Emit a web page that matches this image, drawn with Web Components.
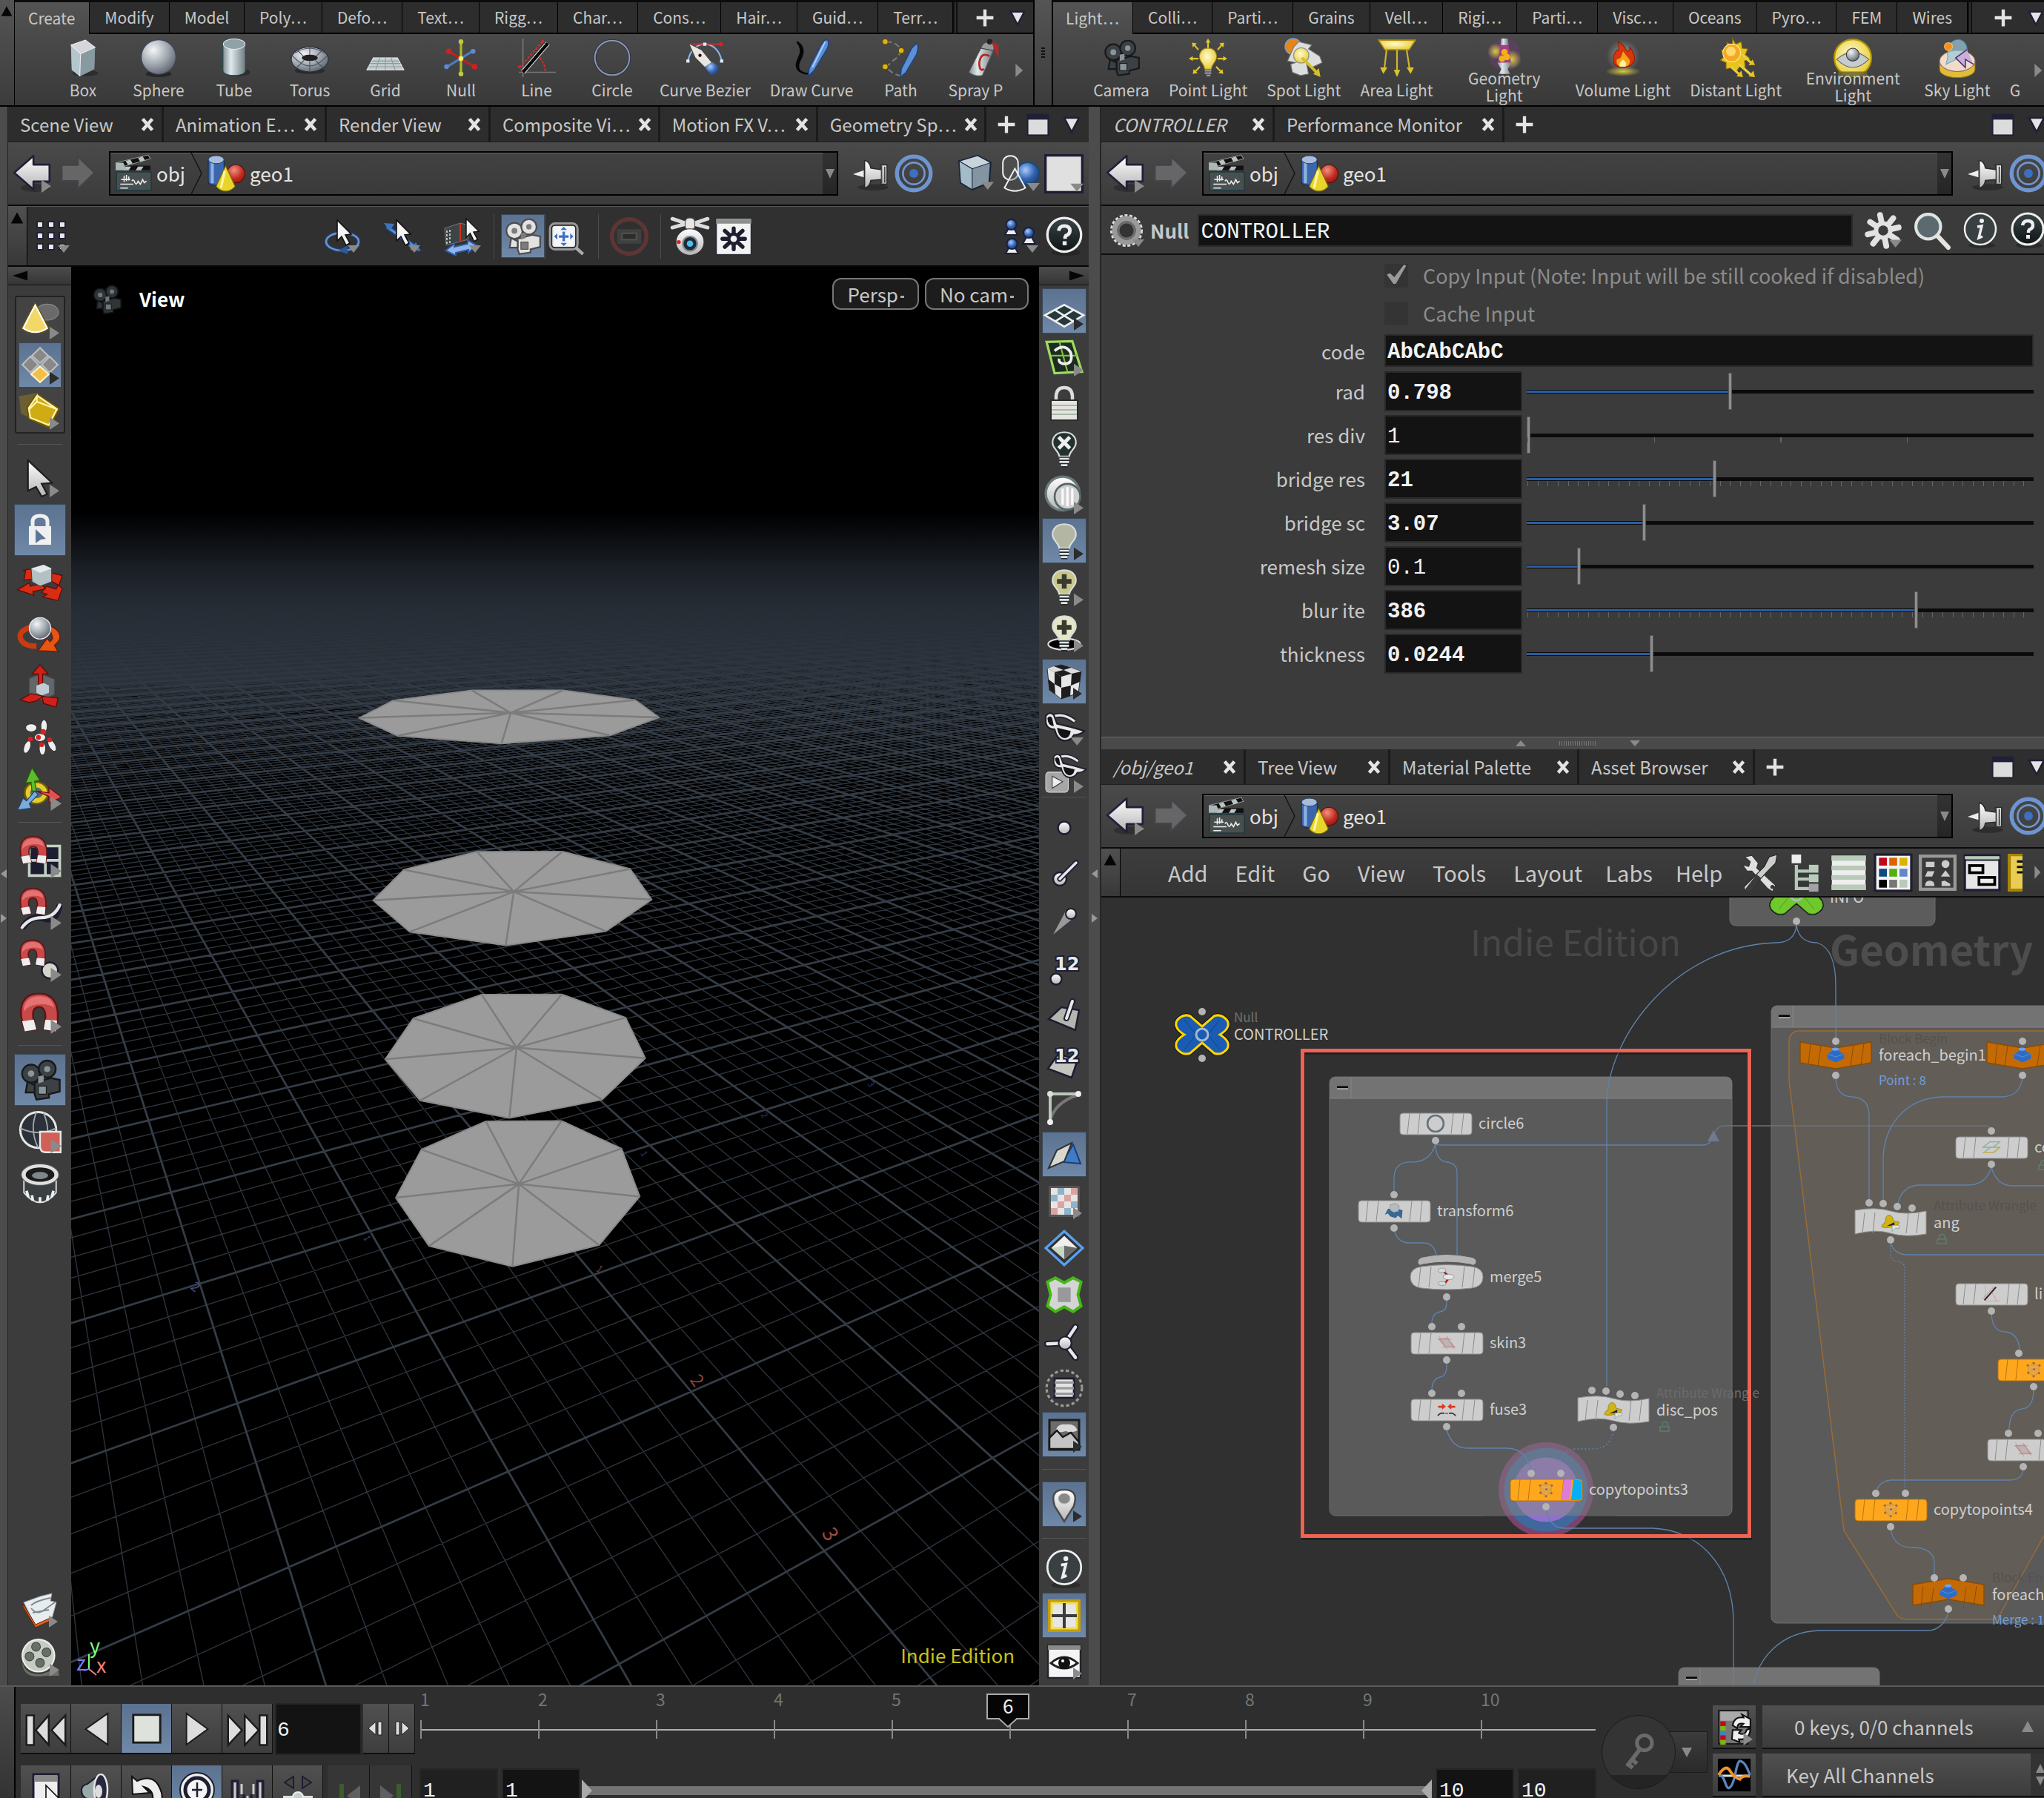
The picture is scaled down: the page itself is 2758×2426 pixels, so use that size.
<!DOCTYPE html>
<html lang="en">
<head>
<meta charset="utf-8">
<title>Geometry editor</title>
<style>
html,body{margin:0;height:100%;background:#2e2e2e;overflow:hidden}
body{font-family:"Noto Sans CJK SC","Noto Sans",sans-serif;color:#c8c8c8}
</style>
</head>
<body>
<hx-app></hx-app>
<script>
/* ---------- icon library: 48 x 48 drawings ---------- */
const DEFS = `<defs>
<linearGradient id="w" x1="0" y1="0" x2="0" y2="1"><stop offset="0" stop-color="#fff"/><stop offset="1" stop-color="#b4b4b4"/></linearGradient>
<linearGradient id="m" x1="0" y1="0" x2="1" y2="0"><stop offset="0" stop-color="#7f8d92"/><stop offset=".35" stop-color="#e0eaec"/><stop offset="1" stop-color="#6f7b80"/></linearGradient>
<radialGradient id="s" cx=".35" cy=".3" r=".8"><stop offset="0" stop-color="#f4f6f8"/><stop offset=".5" stop-color="#a5acb3"/><stop offset="1" stop-color="#565c64"/></radialGradient>
<radialGradient id="b" cx=".4" cy=".35" r=".8"><stop offset="0" stop-color="#a9cbff"/><stop offset=".5" stop-color="#3565b0"/><stop offset="1" stop-color="#16345f"/></radialGradient>
<radialGradient id="r" cx=".4" cy=".3" r=".8"><stop offset="0" stop-color="#f09080"/><stop offset=".6" stop-color="#c02a20"/><stop offset="1" stop-color="#8d1410"/></radialGradient>
<radialGradient id="y" cx=".45" cy=".4" r=".7"><stop offset="0" stop-color="#fffbd0"/><stop offset="1" stop-color="#e4c61e"/></radialGradient>
<radialGradient id="k" cx=".5" cy=".5" r=".5"><stop offset="0" stop-color="#e8d840" stop-opacity=".9"/><stop offset="1" stop-color="#e8d840" stop-opacity="0"/></radialGradient>
<radialGradient id="h" cx=".5" cy=".5" r=".5"><stop offset="0" stop-color="#fff" stop-opacity=".7"/><stop offset="1" stop-color="#aaa" stop-opacity="0"/></radialGradient>
<linearGradient id="d" x1="0" y1="0" x2="0" y2="1"><stop offset="0" stop-color="#3a4446"/><stop offset="1" stop-color="#0e1516"/></linearGradient>
</defs>`;
const magnet = (t) => `<g transform="${t}"><path d="M7 43C-4 12 8 2 23 2C39 2 48 14 42 43L28 42C32 26 30 17 23 17C15 17 14 26 20 42Z" fill="#c94848" stroke="#5a1515" stroke-width="2"/><path d="M6 22C5 10 14 5 23 5C33 5 38 9 40 18C34 12 12 12 6 22Z" fill="#e47272"/><path d="M4 33L17 31 20 42 7 44ZM30 31L43 32 42 44 28 42Z" fill="#eee"/></g>`;
const bulb = (f, x = '') => `<path d="M24 3C12 3 8 12 10 19C12 25 17 27 18 33L30 33C31 27 36 25 38 19C40 12 36 3 24 3Z" fill="${f}" stroke="#d8dcda" stroke-width="2"/><path d="M18 36H30M18 40H30M20 44H28" stroke="#1f2a2c" stroke-width="5"/><path d="M18 36H30M18 40H30M20 44H28" stroke="#e4e4e4" stroke-width="2.400"/>${x}`;
const cursor = (x, y, s = 1) => `<path transform="translate(${x} ${y}) scale(${s})" d="M0 0L0 28 6 22 12 34 17 31 11 20 19 19Z" fill="#f4f4f4" stroke="#111" stroke-width="1.600"/>`;
const movie = (f, l, s) => `<circle cx="14" cy="17" r="10" fill="${f}" stroke="${s}" stroke-width="2"/><circle cx="14" cy="17" r="3.600" fill="${l}"/><circle cx="32" cy="12" r="9.500" fill="${f}" stroke="${s}" stroke-width="2"/><circle cx="32" cy="12" r="3.400" fill="${l}"/><path d="M18 27L36 22 46 24 46 37 34 40 34 44 20 46 18 40Z" fill="${f}" stroke="${s}" stroke-width="2"/><path d="M18 30L10 26 8 38 18 38Z" fill="${f}" stroke="${s}" stroke-width="2"/><rect x="22" y="31" width="9" height="9" fill="${l}" stroke="${s}"/><path d="M22 20L28 19 28 26 22 28Z" fill="${l}"/>`;
const sunglass = `<path d="M7 11Q22 4 37 16" fill="none" stroke="#1d1f2c" stroke-width="6"/><path d="M7 11Q22 4 37 16" fill="none" stroke="#e8e8e8" stroke-width="3"/><path d="M1 9Q6 3 11 8L15 19L32 23L49 28Q44 33 36 33Q33 40 24 40Q15 39 12 26Q3 26 1 18Z" fill="#e8e8e8" stroke="#1d1f2c" stroke-width="2"/><path d="M3 12Q6 8 9 12L11 22Q4 22 3 12ZM15 24L32 28Q31 37 24 37Q17 36 15 24Z" fill="#141414"/>`;
const cubepts = `<path d="M24 8L38 14V32L24 40 10 32V14Z" fill="#dba24d" opacity=".75" stroke="#b07a30"/><path d="M10 14L24 20 38 14M24 20V40" fill="none" stroke="#e9c68c"/><g fill="#8a6a5a"><circle cx="24" cy="7" r="3"/><circle cx="39" cy="13" r="3"/><circle cx="9" cy="13" r="3"/><circle cx="38" cy="33" r="3"/><circle cx="10" cy="32" r="3"/><circle cx="24" cy="41" r="3"/><circle cx="25" cy="23" r="3"/></g>`;
const ICONS = {
box:`<ellipse cx="27" cy="43" rx="16" ry="4" fill="#222" opacity=".6"/><path d="M9 8L27 2 39 11 38 38 20 47 10 39Z" fill="#8b9aa2"/><path d="M9 8L27 2 39 11 21 19Z" fill="#d4d6db"/><path d="M9 8L21 19 20 47 10 39Z" fill="#b4c6cd"/><path d="M21 19L39 11 38 38 20 47Z" fill="#8899a2"/><path d="M9 8L27 2 39 11 21 19ZM21 19L20 47" fill="none" stroke="#eee"/>`,
sphere:`<ellipse cx="24" cy="44" rx="16" ry="4" fill="#1c1c1c" opacity=".7"/><circle cx="24" cy="23" r="21.500" fill="url(#s)" stroke="#3c4468"/>`,
tube:`<ellipse cx="30" cy="42" rx="14" ry="5" fill="#1c1c1c" opacity=".5"/><path d="M10 7V40C10 48 38 48 38 40V7Z" fill="url(#m)" stroke="#1e4a50"/><ellipse cx="24" cy="7" rx="13.500" ry="6.500" fill="#8fa2a8" stroke="#dfe8ea"/>`,
torus:`<ellipse cx="24" cy="40" rx="19" ry="4" fill="#1c1c1c" opacity=".6"/><ellipse cx="24" cy="26" rx="23" ry="15.500" fill="url(#s)" stroke="#2c3040"/><ellipse cx="24" cy="24" rx="10" ry="4" fill="#202022"/><path d="M3 22Q24 46 45 22M6 18Q24 6 42 18M24 11V20M24 28V41M9 15L16 22M39 15L32 22M8 36L17 27M40 36L31 27" fill="none" stroke="#4a5064"/>`,
grid:`<path d="M9 24L39 24 47 39 1 39Z" fill="#c2cdd0" stroke="#eef3f4"/><path d="M7 28H41M5 31H43M3 35H45M17 24L12 39M24 24V39M31 24L36 39" stroke="#8d999d" fill="none"/>`,
nullx:`<g stroke-width="3"><path d="M24 4V44" stroke="#aeb82c"/><path d="M9 16L40 35" stroke="#c02020"/><path d="M38 16L7 35" stroke="#4f7cc0"/></g><g><circle cx="24" cy="4" r="3" fill="#c0ca3a"/><circle cx="24" cy="44" r="3" fill="#c0ca3a"/><circle cx="9" cy="16" r="3.500" fill="#d02020"/><circle cx="41" cy="35" r="3.500" fill="#d02020"/><circle cx="39" cy="16" r="3" fill="#5b8bd4"/><circle cx="6" cy="35" r="3" fill="#5b8bd4"/><circle cx="24" cy="25" r="3" fill="#f4f060"/></g>`,
line:`<path d="M7 0V48M2 42H48" stroke="#777" stroke-width="1.500"/><path d="M7 42L38 6" stroke="#eee" stroke-width="6"/><path d="M7 42L38 6" stroke="#080808" stroke-width="4"/><path d="M3 36L32 3M28 24Q35 32 35 42M31 2L35 6M1 34L6 40" fill="none" stroke="#e02828" stroke-width="2" stroke-dasharray="3 2"/>`,
circle:`<circle cx="24" cy="24" r="21.500" fill="none" stroke="#28304c" stroke-width="3.500"/><circle cx="24" cy="24" r="21.500" fill="none" stroke="#8d97ad" stroke-width="1.800"/>`,
curve:`<path d="M3 28C8 0 40 0 45 28" fill="none" stroke="#82b4f0" stroke-width="2"/><path d="M4 7H44" stroke="#d03030" stroke-width="1.500"/><circle cx="44" cy="7" r="2.500" fill="#e02020"/><path d="M4 6L20 14 33 30 24 36 12 24Z" fill="#e6e6e2" stroke="#444"/><path d="M24 36L33 29 41 34C42 40 38 46 32 46Z" fill="url(#b)"/><circle cx="18" cy="21" r="2" fill="#300"/><path d="M22 5h4v4h-4zM1 26h4v4h-4zM43 26h4v4h-4z" fill="#dfe9ff"/>`,
draw:`<path d="M6 4Q14 14 8 24Q-1 42 20 44Q2 42 10 26Q18 12 6 4Z" fill="#060606" stroke="#060606" stroke-width="2"/><path d="M42 1C46 2 46 6 44 12L27 40 20 47 21 37L36 8Z" fill="#5b8fd6" stroke="#1f447e" stroke-width="1.500"/><path d="M41 4L25 36" stroke="#a9cbf4" stroke-width="2"/>`,
path:`<path d="M6 4Q20 4 24 14Q24 22 14 28L6 36 16 44 26 47" fill="none" stroke="#7a7a7a" stroke-width="2" stroke-dasharray="7 4"/><path d="M44 6C47 8 46 14 44 20L31 42 24 48 25 38L38 12Z" fill="#5b8fd6" stroke="#1f447e" stroke-width="1.500"/><g fill="#dcb414" stroke="#5e4a00"><circle cx="5" cy="4" r="3.500"/><circle cx="25" cy="15" r="3.500"/><circle cx="5" cy="35" r="3.500"/></g>`,
spray:`<path d="M18 12L34 14 20 46Q10 48 3 42Z" fill="url(#m)" stroke="#555"/><path d="M18 12Q20 4 28 4Q36 6 34 15Z" fill="#999" stroke="#444"/><circle cx="29" cy="4" r="3.500" fill="#222"/><path d="M31 4L40 8V26Z" fill="#b02a2a"/><path d="M29 22Q18 16 16 30Q16 42 22 38" fill="none" stroke="#b82424" stroke-width="2.500"/>`,
camera:movie('#3b4144','#8a959a','#17191a'),
cameraw:movie('#e2e2e2','#7c7c7c','#4c4c4c'),
point:`<g stroke="#e2c72a" stroke-width="2"><path d="M24 12V2M12 14L6 7M36 14L42 7M12 25H2M36 25H46M14 35L7 42M34 35L41 42"/></g><g fill="#e2c72a"><path d="M24 0l-3 5h6zM4 5l1 6 5-5zM44 5l-1 6-5-5zM0 25l5-3v6zM48 25l-5-3v6zM5 44l1-6 5 5zM43 44l-1-6-5 5z"/></g><path d="M24 12C15 12 12 20 14 26C16 31 19 32 20 38H28C29 32 32 31 34 26C36 20 33 12 24 12Z" fill="url(#y)" stroke="#a88a10"/><path d="M20 40H28M20 43H28M22 46H27" stroke="#999" stroke-width="2"/>`,
spot:`<circle cx="11" cy="10" r="10" fill="#e88418" stroke="#7aa0c8" stroke-width="1.500"/><path d="M12 10L18 4 34 8 30 13 44 22 47 30 34 36 27 28 30 44 20 46 10 42 8 32 14 30 4 28Z" fill="#dcdede" stroke="#777"/><circle cx="21" cy="21" r="9.500" fill="url(#y)" stroke="#8a8a8a"/><path d="M22 24L42 44" stroke="#d8c020" stroke-width="3.500"/><path d="M45 48l-9-4 7-7z" fill="#d8c020"/>`,
area:`<path d="M1 2H47L39 14H9Z" fill="url(#y)" stroke="#b08a10" stroke-width="1.500"/><g stroke="#d0b62a" stroke-width="2"><path d="M11 14L8 40M24 14V44M36 14L40 40"/></g><g fill="#dcc428"><path d="M7 44l-4-8h9zM24 48l-4-9h8zM41 44l-5-8h9z"/></g>`,
geolight:`<circle cx="24" cy="20" r="20" fill="#7a3c84" opacity=".35"/><circle cx="33" cy="26" r="12" fill="url(#k)"/><circle cx="13" cy="16" r="10" fill="url(#k)"/><path d="M20 0H28L32 30H16Z" fill="#a43c88"/><circle cx="24" cy="17" r="4" fill="#f2b01c"/><circle cx="21" cy="25" r="4" fill="#f2b01c"/><circle cx="27" cy="23" r="4" fill="#f2b01c"/><path d="M20 0H28L29 8H19Z" fill="url(#m)"/><path d="M15 30H33L28 38 31 44H17L20 38Z" fill="url(#m)"/>`,
volume:`<circle cx="24" cy="22" r="21" fill="url(#h)"/><ellipse cx="24" cy="41" rx="22" ry="6" fill="url(#k)"/><path d="M18 4C28 10 26 14 30 16Q34 14 32 10Q40 20 38 28Q34 36 24 36Q12 36 12 26Q12 18 17 14Q20 18 18 4Z" fill="#d8360c" stroke="#8e1c04"/><path d="M24 16Q30 24 32 26Q34 35 24 35Q15 35 16 26Q20 26 22 22Z" fill="#f6a416"/><path d="M24 26Q30 30 27 35H20Q18 31 24 26Z" fill="#fff0a0"/>`,
distant:`<path d="M20 0l4 7 7-3 1 8 7 1-3 7 6 5-7 3 1 8-7-1-4 6-5-5-8 2 0-8-7-3 5-5-4-7 7-2 0-8 7 3z" fill="#e8c41c" stroke="#8c6a08"/><circle cx="19" cy="18" r="11" fill="#f6a820" stroke="#fff0a0"/><circle cx="18" cy="16" r="6" fill="#ffd970"/><g stroke="#e8d040" stroke-width="3"><path d="M32 20L44 31M28 32L44 46M18 35L30 46"/></g><path d="M48 33l-8 0 5-7zM48 48l-8-1 6-7zM33 48l-8-1 6-7z" fill="#e8c41c"/>`,
env:`<circle cx="24" cy="24" r="23" fill="url(#y)" stroke="#b39500" stroke-width="2"/><path d="M4 26Q24 8 44 26Q24 46 4 26Z" fill="#c7ccd1" stroke="#666"/><circle cx="24" cy="20" r="8" fill="url(#s)" stroke="#333"/><path d="M6 41H42V48H6Z" fill="#6e6632" opacity=".85"/>`,
sky:`<path d="M2 28V38C2 52 46 52 46 38V28Z" fill="#e0bc38" stroke="#a07c10"/><ellipse cx="24" cy="28" rx="22" ry="13" fill="#f0dcc8" stroke="#8c7060"/><path d="M12 24Q10 2 26 1Q38 4 36 18L22 26 10 32Z" fill="#9cc8d8" opacity=".7" stroke="#4090b8"/><circle cx="13" cy="10" r="5" fill="#f09018" stroke="#f8c060"/><path d="M36 14L22 24 34 36 34 26 44 32" fill="#c8b0d8" stroke="#50307c" stroke-width="1.500"/>`,
back:`<ellipse cx="28" cy="42" rx="18" ry="5" fill="#2a2a2a" opacity=".7"/><path d="M2 23L26 2V13H46V34H26V44Z" fill="url(#w)" stroke="#20203a" stroke-width="2.500" stroke-linejoin="round"/>`,
fwd:`<path d="M46 23L24 2V13H3V34H24V44Z" fill="#666" stroke="#43434a" stroke-width="2.500" stroke-linejoin="round"/>`,
clap:`<path d="M2 22H47V46H2Z" fill="#48504f" stroke="#1b3a40" stroke-width="1.500"/><path d="M2 14H46V20H2Z" fill="#111"/><path d="M2 10L43 0 46 5 4 17Z" fill="#111" stroke="#999"/><path d="M14 8l6-2 3 5-6 2zM30 4l6-2 3 5-6 2zM14 15h7l-3 5h-7zM30 15h7l-3 5h-7z" fill="#b9c6c2"/><path d="M1 10L11 10 15 20 1 20Z" fill="#aab8b6"/><path d="M8 32H20M12 27V35M15 26V34M18 28V33M22 34Q24 30 26 36Q28 40 30 34L33 38 36 32 38 36 41 34M7 38H24M7 43H17" stroke="#eee" fill="none" stroke-width="1.500"/>`,
geo:`<path d="M1 6V34C1 40 21 40 21 34V6Z" fill="#3c66ac" stroke="#142a52"/><path d="M6 8V36" stroke="#8fb0e0" stroke-width="4"/><ellipse cx="11" cy="6" rx="10" ry="5" fill="#a9bcdc" stroke="#23406e"/><circle cx="36" cy="24" r="11.500" fill="url(#r)" stroke="#5a0c08"/><path d="M23 14L35 40Q30 46 23 46Q16 46 11 40Z" fill="#e8d42c" stroke="#7c6c00"/><path d="M22 20L17 42" stroke="#fff6a0" stroke-width="3"/>`,
pin:`<ellipse cx="26" cy="42" rx="20" ry="4" fill="#262626" opacity=".7"/><path d="M0 25L14 20V29Z" fill="#eee"/><path d="M15 7Q22 9 23 17L36 19V13H44V38H36V32L23 33Q22 41 15 43Z" fill="url(#w)" stroke="#2a2a2a" stroke-width="1.500"/><path d="M41 15V36M37 14V37" stroke="#444" stroke-width="1.800"/>`,
rings:`<circle cx="24" cy="24" r="21" fill="none" stroke="#6f95d0" stroke-width="5"/><circle cx="24" cy="24" r="13.500" fill="none" stroke="#6f95d0" stroke-width="2.500"/><circle cx="24" cy="24" r="5.500" fill="#3f6fc0"/>`,
cube:`<path d="M3 9L27 2 44 11 42 37 20 46 5 37Z" fill="#8395a0" stroke="#16203c" stroke-width="2"/><path d="M3 9L27 2 44 11 20 19Z" fill="#c9d4da" stroke="#16203c"/><path d="M3 9L20 19V46L5 37Z" fill="#a3bcc8" stroke="#16203c"/>`,
shapes:`<circle cx="33" cy="24" r="14" fill="url(#b)" stroke="#174a7c" stroke-width="2"/><rect x="2" y="2" width="19" height="30" rx="9" fill="#555" fill-opacity=".5" stroke="#eee" stroke-width="1.800"/><path d="M17 18L30 42Q17 50 4 42Z" fill="#555" fill-opacity=".35" stroke="#eee" stroke-width="1.800"/>`,
white:`<rect x="1.500" y="1.500" width="45" height="45" fill="#e0e0e0" stroke="#1d1d33" stroke-width="3"/>`,
dots:`<g fill="#e8e8e8" stroke="#20203a" stroke-width="2">${[4,19,34].map(y=>[4,19,34].map(x=>`<rect x="${x}" y="${y}" width="8" height="8"/>`).join('')).join('')}</g>`,
orbit:`<ellipse cx="25" cy="31" rx="22" ry="12" fill="none" stroke="#23406e" stroke-width="5"/><ellipse cx="25" cy="31" rx="22" ry="12" fill="none" stroke="#6f95d0" stroke-width="2.500"/><path d="M20 43l12-7v12z" fill="#2c5aa0"/>${cursor(18,2)}`,
pan:`<path d="M3 11L44 40" stroke="#1f4a88" stroke-width="6"/><path d="M3 11L44 40" stroke="#5b8fd6" stroke-width="3"/><path d="M-1 6l14 1-6 10zM49 44l-15-2 8-10z" fill="#3f74bc"/>${cursor(16,2)}`,
dolly:`<path d="M-1 13L20 6 31 9V28L1 36Z" fill="#3d4446" stroke="#777"/><path d="M2 16V34M6 15V33" stroke="#bbb" stroke-width="2" stroke-dasharray="3 2"/><path d="M20 7V30" stroke="#d03018" stroke-width="2"/><path d="M0 43L12 34V38L30 34V29L42 36 31 46V42L14 46V50Z" fill="#8fb4ec" stroke="#2c5aa0" stroke-width="2"/>${cursor(28,0,.9)}`,
zoomf:`<rect x="3" y="8" width="34" height="32" rx="6" fill="#e6e8ea" stroke="#999" stroke-width="3"/><rect x="8" y="12" width="24" height="24" fill="#f4f6fb"/><path d="M20 18V30M14 24H26" stroke="#3f6fc0" stroke-width="3"/><path d="M20 12l-4 4h8zM20 36l-4-4h8zM8 24l4-4v8zM32 24l-4-4v8z" fill="#3f6fc0"/><rect x="5" y="10" width="30" height="28" rx="4" fill="none" stroke="#222" stroke-width="1.500"/><path d="M35 38L44 46" stroke="#aaa" stroke-width="4"/>`,
stop0:`<circle cx="24" cy="24" r="21.500" fill="none" stroke="#5e3535" stroke-width="5"/><rect x="9" y="15" width="30" height="18" fill="#404040"/><rect x="15" y="20" width="18" height="8" fill="#2c2c2c" stroke="#4e524a" stroke-width="2"/>`,
robot:`<path d="M2 2L20 8L2 13M46 2L28 8L46 13" fill="none" stroke="#ddd" stroke-width="4.500" stroke-linecap="round"/><rect x="18" y="1" width="12" height="15" rx="5" fill="#e6e6e6" stroke="#555"/><ellipse cx="24" cy="31" rx="17.500" ry="16.500" fill="url(#w)" stroke="#333"/><circle cx="24" cy="33" r="9" fill="#1b2a3a" stroke="#888" stroke-width="2"/><circle cx="24" cy="33" r="4" fill="#4fc0e8"/><circle cx="10" cy="31" r="2.500" fill="#e02020"/>`,
gearwin:`<rect x="2" y="1" width="44" height="46" fill="#f2f2f2" stroke="#2a2d38" stroke-width="2"/><path d="M2 2H46V8H2Z" fill="#8d8f8a"/><g stroke="#1d1f30" stroke-width="5" stroke-linecap="round"><path d="M24 14V40M13 17L35 37M35 17L13 37M10 27H38"/></g><circle cx="24" cy="27" r="8" fill="#1d1f30"/><circle cx="24" cy="27" r="4" fill="#f2f2f2"/>`,
people:`<g stroke="#1a1f44" stroke-width="2"><path d="M3 22L8 13H15L20 22ZM27 34L32 25H39L44 34ZM4 47L9 38H16L21 47Z" fill="#eee"/><circle cx="11.500" cy="8" r="7" fill="url(#b)"/><circle cx="35" cy="19" r="7" fill="url(#b)"/><circle cx="12.500" cy="34" r="7" fill="url(#b)"/></g>`,
help:`<ellipse cx="26" cy="44" rx="18" ry="4" fill="#1c1c1c" opacity=".5"/><circle cx="24" cy="22" r="21" fill="url(#d)" stroke="#eee" stroke-width="3"/><path d="M17 17Q18 11 24 11Q31 11 31 17Q31 21 26 23Q25 24 25 27" fill="none" stroke="#eee" stroke-width="4.500"/><rect x="22" y="30" width="5" height="5" fill="#eee"/>`,
info:`<ellipse cx="26" cy="44" rx="18" ry="4" fill="#1c1c1c" opacity=".5"/><circle cx="24" cy="22" r="21" fill="#394041" stroke="#eee" stroke-width="2.500"/><circle cx="26" cy="11" r="3" fill="#eee"/><path d="M20 19L26 18 22 34 27 32" fill="none" stroke="#eee" stroke-width="3.500"/>`,
nullring:`<circle cx="24" cy="24" r="20" fill="none" stroke="#ddd" stroke-width="4" stroke-dasharray="4 2.500"/><circle cx="24" cy="24" r="16" fill="none" stroke="#999" stroke-width="7"/><circle cx="24" cy="24" r="11" fill="#333" stroke="#6b6b6b" stroke-width="3"/>`,
gear:`<g stroke="#e2e2e2" stroke-width="7.500" stroke-linecap="round"><path d="M20 4L28 44M37 8L11 41M44 20L4 29M42 36L7 13"/></g><circle cx="24" cy="24" r="12" fill="#e2e2e2"/><circle cx="24" cy="24" r="6.500" fill="#3c3c3c"/>`,
search:`<circle cx="19" cy="19" r="16" fill="#5c6a70" stroke="#dde4e2" stroke-width="4"/><path d="M31 31L45 46" stroke="#e4e4e0" stroke-width="6" stroke-linecap="round"/>`,
cone:`<ellipse cx="33" cy="14" rx="14" ry="10" fill="#6a6a6a" stroke="#8a8a8a"/><path d="M18 5L33 34Q18 44 3 34Z" fill="#f2d868" stroke="#fff" stroke-width="2"/><path d="M18 2L36 35Q18 47 0 35Z" fill="none" stroke="#705400"/>`,
grid4:`<path d="M24 2L34 12 24 21 14 12ZM12 13L22 23 12 33 2 23ZM36 13L46 23 36 33 26 23Z" fill="#888" stroke="#bdbdbd" stroke-width="2"/><path d="M24 25L35 35 24 45 13 35Z" fill="#f0c048" stroke="#fff0c8" stroke-width="2"/>`,
slab:`<path d="M-2 6L20 2 12 20 14 34 0 28Z" fill="#a8891c" opacity=".4"/><path d="M20 3L48 22 35 45 10 34 8 20Z" fill="#d0ac14" stroke="#6e5600" stroke-width="2"/><path d="M20 5L45 22 35 42 12 33 10 21 20 6V13L11 22M20 13L44 22" fill="none" stroke="#fff4b0" stroke-width="2"/>`,
arrow:`<path d="M9 2L39 30 26 31 33 44 26 47 19 35 9 40Z" fill="url(#w)" stroke="#1c1c1c" stroke-width="2"/>`,
lock:`<path d="M14 20V13Q14 5 24 5Q34 5 34 13V20" fill="none" stroke="#f0f0f0" stroke-width="5"/><rect x="9" y="19" width="30" height="25" fill="#f0f0f0"/><path d="M18 23L32 36 25 37 18 42Z" fill="#5e7696"/>`,
move:`<path d="M-1 33L12 25 13 29 25 26 30 32 16 35 17 39ZM26 36L31 29 42 32 44 28 49 31 44 45 27 41 32 38ZM28 20L37 18 36 14 49 17 45 28 38 24ZM6 22L8 12 5 11 18 9 18 21Z" fill="#d82c14" stroke="#5c0c04"/><path d="M14 9L28 5 37 9V24L24 29 15 24Z" fill="#b4c0c4" stroke="#3c4448"/><path d="M14 9L28 5 37 9 24 14Z" fill="#e4eaec"/>`,
rotate:`<path d="M13 17Q-2 22 3 31Q7 38 20 38" fill="none" stroke="#c83c10" stroke-width="6"/><path d="M34 15Q48 20 46 30Q44 34 40 37L44 44 22 43 32 29 35 33Q40 30 37 25Z" fill="#e85414" stroke="#6a1804"/><circle cx="24" cy="18" r="12" fill="url(#s)" stroke="#eef"/>`,
scale:`<path d="M12 16L25 11 40 17V34L26 40 12 34Z" fill="#7c8488" opacity=".6" stroke="#556"/><path d="M24 1L33 11H27V24H22V11H15ZM2 40L14 33 28 36 20 41 12 43ZM26 36L44 38 42 48 28 44Z" fill="#d02018" stroke="#5c0804"/><path d="M20 24L28 21 34 24V32L26 35 20 32Z" fill="#c0ccd4"/>`,
pose:`<g fill="#eee" stroke="#333"><ellipse cx="13" cy="12" rx="7" ry="5"/><ellipse cx="29" cy="10" rx="4" ry="8"/><ellipse cx="24" cy="24" rx="7" ry="5"/><ellipse cx="8" cy="36" rx="4" ry="8" transform="rotate(20 8 36)"/><ellipse cx="27" cy="38" rx="4" ry="8"/><ellipse cx="39" cy="34" rx="4" ry="8" transform="rotate(-30 39 34)"/></g><g fill="#d82020"><circle cx="28" cy="17" r="3.500"/><circle cx="22" cy="24" r="3"/><circle cx="12" cy="26" r="3"/><circle cx="26" cy="33" r="3"/><circle cx="36" cy="27" r="3"/></g>`,
handle:`<ellipse cx="20" cy="28" rx="13" ry="12" fill="#e4cc30" stroke="#6e6200" stroke-width="2"/><ellipse cx="20" cy="28" rx="7" ry="6" fill="#666"/><path d="M15 0L24 14 18 15 20 26H15L14 16 8 17Z" fill="#5cbc2c" stroke="#245c0c"/><path d="M20 26L34 28V22L48 33 34 39V32Z" fill="#e05050" stroke="#6c1010"/><path d="M22 30L12 40 14 45-1 47 5 34 9 37 18 26Z" fill="#7cacdc" stroke="#204878"/>`,
maggrid:`<path d="M12 12H46V45H12Z" fill="#1c1d30" stroke="#c2d2c4" stroke-width="3"/><path d="M30 12V45M12 28H46" stroke="#c2d2c4" stroke-width="3"/>${magnet('translate(0 0) scale(.72)')}`,
magcurve:`<path d="M4 46Q14 30 28 35T46 20" fill="none" stroke="#1c1d30" stroke-width="7"/>${magnet('translate(0 0) scale(.7)')}<path d="M4 45Q12 34 26 34T46 20" fill="none" stroke="#e8e8e8" stroke-width="3.500" stroke-linecap="round"/>`,
magpt:`<circle cx="35" cy="35" r="9" fill="#d4d4cc" stroke="#1c1d30" stroke-width="2"/>${magnet('scale(.68)')}`,
mag:magnet('translate(0 1)'),
globe:`<circle cx="22" cy="22" r="20" fill="#2c3038" stroke="#e6e6e6" stroke-width="2.500"/><path d="M2 20Q22 30 42 20M20 2Q12 22 22 42M28 3Q36 22 30 40" fill="none" stroke="#9aa" stroke-width="1.500"/><path d="M24 24H47V47H30Q24 47 24 40Z" fill="#d06058" stroke="#e8e8e8" stroke-width="2"/>`,
lens:`<path d="M6 14V34Q24 56 42 34V14Z" fill="#3a4042" stroke="#e4e4e4" stroke-width="1.500"/><path d="M9 32L11 39M15 37L16 43M24 39V45M33 37L32 43M39 32L37 39" stroke="#eee" stroke-width="3"/><ellipse cx="24" cy="14" rx="21" ry="12" fill="#e0e0e0" stroke="#555"/><ellipse cx="24" cy="14" rx="16" ry="8" fill="#1c1c1c"/><ellipse cx="24" cy="15" rx="9" ry="4" fill="#7e888c"/>`,
notebook:`<path d="M2 14L24 6 40 2 38 12 46 14 40 36 18 46Z" fill="#e8ecee" stroke="#99a"/><path d="M1 16L18 44 40 34V38L18 48 1 20Z" fill="#e06424" stroke="#602000"/><path d="M12 18Q18 12 38 8M12 22Q20 32 30 24L44 14M14 28L36 24" fill="none" stroke="#7c8c94" stroke-width="2"/>`,
reel:`<path d="M2 28Q4 47 26 45L46 38 48 47H30Q2 52 2 30Z" fill="#6c7068"/><circle cx="22" cy="22" r="20" fill="#c4cec0" stroke="#eee" stroke-width="2"/><g fill="#6a6e68" stroke="#444"><circle cx="19" cy="11" r="5.500"/><circle cx="32" cy="18" r="5.500"/><circle cx="11" cy="23" r="5.500"/><circle cx="24" cy="31" r="5.500"/></g>`,
gridp:`<path d="M24 16L48 29 24 43 0 29Z" fill="#26383a" stroke="#eee" stroke-width="2.500"/><path d="M12 22L36 37M36 22L12 37" stroke="#eee" stroke-width="2.500"/>`,
greeng:`<path d="M2 5L34 4 46 42 12 44Z" fill="#1d2c20" stroke="#a0dc60" stroke-width="3"/><path d="M18 5L28 42M7 22L40 22" stroke="#7cc040" stroke-width="2"/><path d="M12 16Q24 6 32 18Q36 34 22 32Q16 30 18 26" fill="none" stroke="#eee" stroke-width="3.500"/>`,
padlock:`<path d="M13 21V14Q14 3 24 3Q34 3 35 14V21" fill="none" stroke="#ddd" stroke-width="4.500"/><rect x="6" y="20" width="36" height="27" fill="#e4e4e0" stroke="#2b2b2b" stroke-width="2"/><path d="M7 27H41M7 33H41M7 39H41" stroke="#a9b8a8" stroke-width="2"/>`,
bulbx:bulb('#22302f','<path d="M17 9L31 23M31 9L17 23" stroke="#eee" stroke-width="4.500"/>'),
ball:`<circle cx="22" cy="22" r="21" fill="url(#w)" stroke="#6b7a7c" stroke-width="3"/><circle cx="28" cy="26" r="16" fill="#d0d0d0" stroke="#566" stroke-width="2.500"/><path d="M22 16V36M28 14V38M34 16V36" stroke="#fafafa" stroke-width="3"/>`,
bulb:bulb('#b4b6a4'),
bulbp:bulb('#c9c78c','<path d="M24 8V26M15 17H33" stroke="#3a3a30" stroke-width="6"/>'),
bulbr:`<ellipse cx="24" cy="38" rx="20" ry="7" fill="#000" stroke="#ddd" stroke-width="2"/>${bulb('#e6e6c8','<path d="M24 8V26M15 17H33" stroke="#3a3a30" stroke-width="6"/>')}`,
checker:`<path d="M1 6L20 1 47 10 43 39 20 47 4 35Z" fill="#e6e6e6" stroke="#333"/><path d="M10 3L20 1 33 5 23 8ZM23 8L33 5 47 10 34 13ZM1 6L10 3 23 8 11 11ZM2 20L11 27 12 41 4 35ZM11 11L20 17V32L11 27ZM34 13L47 10 45 24 33 29ZM20 32L33 29 32 43 20 47Z" fill="#1d1d1d"/><path d="M1 6L10 3 23 8 11 11ZM23 8L33 5 47 10 34 13Z" fill="#ddd"/><path d="M23 8L34 13 20 17 11 11Z" fill="#1d1d1d"/>`,
glasses:sunglass,
glassplay:`<rect x="1" y="22" width="28" height="25" rx="4" fill="#a6a6a6" stroke="#ddd"/><path d="M9 27L22 34 9 42Z" fill="#eee" stroke="#333"/><g transform="translate(10 -5) scale(.84)">${sunglass}</g>`,
dot:`<circle cx="24" cy="24" r="8.500" fill="url(#w)" stroke="#1d1d33" stroke-width="2.500"/>`,
dotline:`<circle cx="18" cy="30" r="9" fill="url(#w)" stroke="#1d1d33" stroke-width="2.500"/><path d="M18 30L40 8" stroke="#1d1d33" stroke-width="7" stroke-linecap="round"/><path d="M18 30L40 8" stroke="#e6e6e6" stroke-width="3.500" stroke-linecap="round"/>`,
comet:`<path d="M9 42L26 10 36 20Z" fill="#999"/><circle cx="33" cy="14" r="7" fill="url(#w)" stroke="#1d1d33" stroke-width="2"/>`,
plane:`<path d="M3 30L20 14 44 18 39 45Z" fill="#b4b6ae" stroke="#1d1d33" stroke-width="2.500"/><path d="M27 29L35 6" stroke="#1d1d33" stroke-width="8" stroke-linecap="round"/><path d="M27 29L35 6" stroke="#e8e8e8" stroke-width="4" stroke-linecap="round"/>`,
curve2:`<path d="M4 44Q10 16 44 6" fill="none" stroke="#777" stroke-width="4"/><path d="M5 42V5H42" fill="none" stroke="#b9c8ba" stroke-width="4"/><circle cx="5" cy="5" r="4" fill="#d6e2d6"/><circle cx="43" cy="5" r="4" fill="#eee"/><circle cx="5" cy="43" r="4" fill="#eee"/>`,
flip:`<path d="M22 34L36 10 46 36Z" fill="#3f7cc8" stroke="#1c3c74" stroke-width="2"/><path d="M3 42L14 18 34 8 24 33Z" fill="#d8d8d0" stroke="#333" stroke-width="2"/>`,
check2:`<rect x="3" y="3" width="42" height="42" rx="2" fill="#555"/>${[0,1,2,3].map(r=>[0,1,2,3].map(c=>`<rect x="${6+c*9}" y="${6+r*9}" width="9" height="9" fill="${(r+c)%2?((r+c)%4===1?'#8fb4c8':'#d9a4a4'):'#e8e4e4'}"/>`).join('')).join('')}`,
diamond:`<path d="M24 3L47 24 24 45 1 24Z" fill="#333" stroke="#5aa0f0" stroke-width="3"/><path d="M24 9L40 24 24 38 8 24Z" fill="#c8d4c4"/><path d="M24 9L40 24 24 21 8 24Z" fill="#eee"/><path d="M24 21L40 24 24 38Z" fill="#6a6a6a"/>`,
greenq:`<path d="M3 8L13 3 24 9 35 3 45 8 41 24 45 38 35 45 24 39 13 45 3 38 7 24Z" fill="#d4d4d4" stroke="#44b814" stroke-width="3.500"/><path d="M16 15H32V33H16Z" fill="#999"/>`,
spokes:`<path d="M24 26L3 27M26 24L38 6M26 28L38 44" stroke="#1d1d33" stroke-width="8" stroke-linecap="round"/><path d="M24 26L3 27M26 24L38 6M26 28L38 44" stroke="#e8e8e8" stroke-width="4" stroke-linecap="round"/><circle cx="25" cy="26" r="8" fill="url(#w)" stroke="#1d1d33" stroke-width="2"/>`,
film:`<circle cx="24" cy="24" r="22" fill="none" stroke="#999" stroke-width="3" stroke-dasharray="4 3"/><rect x="12" y="12" width="24" height="24" fill="#e4e4e4" stroke="#1d1d33" stroke-width="2.500"/><path d="M12 17H36M12 24H36M12 31H36" stroke="#999" stroke-width="3"/>`,
image:`<rect x="4" y="4" width="40" height="40" fill="#6c6c6c" stroke="#1d1d1d" stroke-width="3"/><path d="M12 18Q16 8 26 10Q38 8 42 18Q34 22 26 19Q16 22 12 18Z" fill="#d8d8d8"/><path d="M4 28L14 18 22 27 33 21 44 34V43H4Z" fill="#c4c4c4" stroke="#1a1a1a" stroke-width="2.500"/>`,
marker:`<path d="M24 47L11 26Q4 4 24 4Q44 4 37 26Z" fill="url(#w)" stroke="#4a4a4a" stroke-width="2.500"/><ellipse cx="24" cy="16" rx="8" ry="7" fill="#888" stroke="#bbb"/>`,
panes:`<rect x="4" y="4" width="40" height="40" fill="#f2ecb4" stroke="#c49c10" stroke-width="4"/><rect x="7" y="7" width="34" height="34" fill="#e6e6e6" stroke="#f0e040" stroke-width="3"/><path d="M24 7V41M7 24H41" stroke="#3c3c3c" stroke-width="4"/>`,
eye:`<rect x="2" y="2" width="44" height="44" fill="#f4f4f4" stroke="#24262e" stroke-width="2.500"/><path d="M2 2H46V8H2Z" fill="#888b86"/><path d="M6 26Q24 10 42 26Q24 40 6 26Z" fill="#fff" stroke="#222" stroke-width="3"/><circle cx="24" cy="26" r="8" fill="#111"/><circle cx="22" cy="23" r="2" fill="#fff"/>`,
num12:`<circle cx="13" cy="39" r="7.500" fill="url(#w)" stroke="#1d1d33" stroke-width="2.500"/>`,
pl12:`<path d="M2 34L16 14 42 22 34 46Z" fill="#c4c6be" stroke="#1d1d33" stroke-width="2.500"/>`,
tools:`<path d="M5 4L14 2 22 12 20 18 44 40 40 48 34 44 14 22 8 22 2 14 10 16 12 10Z" fill="#dfe0de" stroke="#333"/><path d="M46 1L44 12 34 22 12 46 5 47 4 42 30 16 36 4Z" fill="#cacfca" stroke="#222"/><path d="M20 26L26 31 12 47 4 47Z" fill="#3a3a3a"/><circle cx="40" cy="42" r="2.500" fill="#333"/>`,
tree:`<path d="M14 14V44H30M14 22H30M14 32H30" stroke="#b4c8b8" stroke-width="4" fill="none"/><rect x="8" y="1" width="12" height="11" fill="#eee"/><rect x="30" y="14" width="12" height="10" fill="#b9ccbc"/><rect x="30" y="26" width="12" height="10" fill="#b9ccbc"/><rect x="30" y="38" width="12" height="10" fill="#a4a0a8"/>`,
list:`<path d="M2 2H46V46H2Z" fill="#eee" stroke="#2b2b2b"/><path d="M2 2H46V9H2ZM2 15H46V21H2ZM2 27H46V33H2ZM2 39H46V46H2Z" fill="#b9c9ba"/>`,
palette:`<rect x="1" y="1" width="46" height="46" fill="#f4f4f4" stroke="#1d1d33" stroke-width="3"/>${['#c00818','#dc6400','#dcb400','#104884','#54b010','#6088c8','#000','#777','#b9c9ba'].map((c,i)=>`<rect x="${6+(i%3)*13}" y="${5+(i/3|0)*14}" width="10" height="10" fill="${c}"/>`).join('')}`,
shapes9:`<rect x="2" y="3" width="44" height="42" fill="#3a3a3a" stroke="#999" stroke-width="4"/><path d="M9 10H20V17H9ZM11 22H20L17 29H8ZM28 29L34 21 40 29ZM29 35L33 34 40 38V41H29ZM8 41Q8 34 14 34Q20 34 20 41Z" fill="#ccc"/><circle cx="34" cy="13" r="5" fill="#ccc"/>`,
netwin:`<rect x="2" y="2" width="44" height="44" fill="#e6e6e6" stroke="#1d1d33" stroke-width="3"/><path d="M2 3H46V7H2Z" fill="#b9c9ba"/><path d="M2 8H46" stroke="#1d1d33" stroke-width="2"/><rect x="8" y="15" width="17" height="9" fill="#eee" stroke="#000" stroke-width="3.500"/><rect x="20" y="30" width="20" height="9" fill="#eee" stroke="#000" stroke-width="3.500"/>`,
note:`<path d="M2 1H48V47H2Z" fill="#e8cc54" stroke="#a88400" stroke-width="4"/><path d="M12 10H48M12 17H48M12 24H48" stroke="#111" stroke-width="3"/>`,
first:`<g fill="#ddd" stroke="#1b1b1b" stroke-width="2"><rect x="3" y="10" width="8" height="32"/><path d="M27 10L13 26 27 42ZM45 10L30 26 45 42Z"/></g>`,
last:`<g fill="#ddd" stroke="#1b1b1b" stroke-width="2"><rect x="37" y="10" width="8" height="32"/><path d="M3 10L18 26 3 42ZM21 10L36 26 21 42Z"/></g>`,
revp:`<path d="M40 3L9 25 40 47Z" fill="#ddd" stroke="#1b1b1b" stroke-width="2"/>`,
stop:`<rect x="5" y="5" width="38" height="39" fill="#dde2dd" stroke="#1b1b1b" stroke-width="3"/>`,
play:`<path d="M9 3L39 25 9 47Z" fill="#ddd" stroke="#1b1b1b" stroke-width="2"/>`,
stepb:`<path d="M24 6V42L4 24ZM30 6H40V42H30Z" fill="#ddd" stroke="#1b1b1b" stroke-width="2"/>`,
stepf:`<path d="M24 6V42L44 24ZM8 6H18V42H8Z" fill="#ddd" stroke="#1b1b1b" stroke-width="2"/>`,
winarrow:`<path d="M7 3H41V48H7Z" fill="#eee" stroke="#1d1d33" stroke-width="3"/><path d="M9 4H39V13H9Z" fill="#888"/>${cursor(24,18)}`,
speaker:`<path d="M4 24Q4 18 12 16L30 2Q40 14 36 46L12 36Q4 34 4 24Z" fill="#9aa" stroke="#1d1d33" stroke-width="2"/><ellipse cx="30" cy="24" rx="9" ry="21" fill="#26283e" stroke="#e6e6e6" stroke-width="2.500"/><ellipse cx="27" cy="26" rx="5" ry="9" fill="#ddd"/>`,
loop:`<path d="M5 30L4 6 11 12Q36 0 44 28Q46 38 42 46H8V38H32Q34 24 20 20L28 28Z" fill="#eee" stroke="#111" stroke-width="2"/>`,
clock:`<circle cx="24" cy="24" r="23" fill="#eee" stroke="#1d1d33" stroke-width="2"/><circle cx="24" cy="24" r="16" fill="#f4f4f4" stroke="#1d1d33" stroke-width="5"/><path d="M24 14V34M17 24H31" stroke="#1d1d33" stroke-width="2.500"/>`,
ticks:`<path d="M3 48V12H11V48M37 48V12H45V48M19 48V30M29 48V30" fill="none" stroke="#1d1d33" stroke-width="3"/><path d="M7 14V48M16 16V30M24 32V48M32 16V30M41 14V48" stroke="#ccc" stroke-width="3"/>`,
keys:`<path d="M18 6L6 14 18 22ZM30 6L42 14 30 22Z" fill="#444" stroke="#1d1d33" stroke-width="2"/><path d="M4 34H44" stroke="#ddd" stroke-width="4"/><circle cx="24" cy="34" r="7" fill="#c4d0c8" stroke="#eee" stroke-width="2"/>`,
kprev:`<path d="M12 16H18V48H12Z" fill="#3c5c2c"/><path d="M40 18L22 32 40 46Z" fill="#606060"/>`,
knext:`<path d="M32 16H38V48H32Z" fill="#3c5c2c"/><path d="M10 18L28 32 10 46Z" fill="#606060"/>`,
key:`<circle cx="31" cy="13" r="9" fill="none" stroke="#6a6a6a" stroke-width="4.500"/><path d="M26 20L10 41M16 33L22 38M11 38L17 43" stroke="#6a6a6a" stroke-width="5"/>`,
refresh:`<rect x="4" y="3" width="38" height="43" fill="#777" stroke="#1b1b1b" stroke-width="2"/><path d="M6 4H40V16H6Z" fill="#aaa"/>${['#c00818','#7cb80c','#3c84cc','#c00818','#7cb80c'].map((c,i)=>`<rect x="6" y="${17+i*6}" width="7" height="6" fill="${c}"/>`).join('')}<path d="M22 22Q24 10 36 12L34 8 45 14V24H32L36 20Q28 18 28 26ZM22 28H33L30 32Q38 36 40 28L45 26Q44 42 30 40L31 44 21 40Z" fill="#eee" stroke="#111" stroke-width="2"/>`,
wave:`<rect x="1" y="1" width="46" height="46" fill="#000"/><path d="M2 25H46" stroke="#ddd" stroke-width="3"/><path d="M2 24Q8 24 11 34T17 42Q22 40 26 20T34 5Q40 6 46 24" fill="none" stroke="#5c84c0" stroke-width="3.500"/><path d="M2 24Q12 8 18 18T32 30Q36 24 46 26" fill="none" stroke="#f09428" stroke-width="4"/>`,
x:`<path d="M11 9L37 39M37 9L11 39" stroke="#e4e4e4" stroke-width="9"/>`,
plus:`<path d="M24 3V45M3 24H45" stroke="#e4e4e4" stroke-width="8"/>`,
win:`<path d="M1 1H47V47H1Z" fill="#1f1f38"/><path d="M4 13H44V44H4Z" fill="#dcdcdc"/>`,
down:`<path d="M4 6H44L24 44Z" fill="#e4e4e4" stroke="#1f1f38" stroke-width="5"/>`,
ups:`<path d="M24 4L46 44H2Z" fill="#050505"/>`,
lefts:`<path d="M2 24L46 10V38Z" fill="#050505"/>`,
rights:`<path d="M46 24L2 10V38Z" fill="#050505"/>`,
n_transform:`<path d="M0 34L8 18 18 18 20 26 34 26 34 18 46 22 44 44 34 36 28 42 14 38 8 30Z" fill="#386894"/><path d="M14 8L28 4 37 10V22L24 28 14 22Z" fill="#b4bcc0" stroke="#678"/>`,
n_merge:`<path d="M14 8L32 24 20 40" stroke="#b02020" stroke-width="5" fill="none"/><ellipse cx="12" cy="7" rx="10" ry="6" fill="#d4dcdc" stroke="#667"/><ellipse cx="29" cy="24" rx="14" ry="7" fill="#e4e8e8" stroke="#667"/><ellipse cx="12" cy="41" rx="10" ry="5" fill="#d4dcd4" stroke="#667"/>`,
n_skin:`<path d="M4 14L26 12 44 34 20 34Z" fill="#bdb4b4" stroke="#c08080" stroke-width="2"/><path d="M0 14H36M12 35H48M4 6L26 42M24 6L44 40" stroke="#c48c8c" stroke-width="1.500"/>`,
n_fuse:`<path d="M2 14H12V8L22 16 12 24V19H2ZM46 14H36V8L26 16 36 24V19H46Z" fill="#d83a20"/><path d="M0 40Q10 30 18 34M48 40Q38 30 30 34" fill="none" stroke="#333" stroke-width="3"/><path d="M20 34H28" stroke="#c44" stroke-width="3"/>`,
n_hat:`<path d="M0 34Q6 22 10 24Q10 2 22 4Q32 8 30 18L46 22Q46 30 34 32Q12 40 0 34Z" fill="#d0b414" stroke="#6e5e00"/><path d="M14 32L34 22V30Z" fill="#222"/><path d="M28 30H46V38H36L28 46V38Z" fill="#dde4d8" stroke="#678"/>`,
n_brick:`<path d="M2 20L14 14V6L32 6V14L46 20V32L24 42 2 32Z" fill="#2c6cc8"/><ellipse cx="23" cy="8" rx="9" ry="4" fill="#6ca0ec"/><path d="M2 20L24 28 46 20" fill="none" stroke="#7cb0f4"/>`,
n_color:`<path d="M2 24L20 10H46L28 24ZM4 38L22 24H46L30 38Z" fill="none" stroke="#8cae9c" stroke-width="2.500"/><path d="M4 38H28L46 24" fill="none" stroke="#c8b048" stroke-width="2.500"/>`,
n_line:`<path d="M8 2V42H46" fill="none" stroke="#a99"/><path d="M6 40L36 6" stroke="#322" stroke-width="4"/><path d="M2 36L32 3M26 22Q34 30 36 42" stroke="#c88" stroke-width="2" fill="none" stroke-dasharray="3 2"/>`,
n_cube:cubepts,
n_circle:`<circle cx="24" cy="24" r="21" fill="none" stroke="#64737a" stroke-width="5"/>`
};
const TRI = {
 down:`<path d="M32 36H48L40 46Z" fill="#8a8a8a"/>`,
 right:`<path d="M36 32L48 40 36 48Z" fill="#8a8a8a"/>`,
 dark:`<path d="M36 32L48 40 36 48Z" fill="#2c2c2c"/>`
};
class HxIcon extends HTMLElement{
 connectedCallback(){
  const s=this.getAttribute('size')||52,n=this.getAttribute('name'),t=this.getAttribute('tri');
  const num=(n==='num12'||n==='pl12')?`<text x="11" y="${n==='num12'?27:25}" font-family="DejaVu Sans" font-weight="700" font-size="24" fill="#e8e8e8" stroke="#1d1d33" stroke-width="4" paint-order="stroke">12</text>`:'';
  this.attachShadow({mode:'open'}).innerHTML=`<style>:host{display:block;flex:none;width:${s}px;height:${s}px}svg{display:block;overflow:visible}</style><svg width="${s}" height="${s}" viewBox="0 0 48 48">${DEFS}${ICONS[n]||''}${num}${t?TRI[t]:''}</svg>`;
 }
}
customElements.define('hx-icon',HxIcon);
const ic=(n,s=52,t='')=>`<hx-icon name="${n}" size="${s}"${t?` tri="${t}"`:''}></hx-icon>`;
const RESET=`*{box-sizing:border-box}button,input,select{font:inherit;color:inherit;border:0;margin:0;padding:0;background:none;border-radius:0}button{display:flex;align-items:center;justify-content:center;flex:none}`;

/* ---------- shelf: tab strip above a row of tools ---------- */
class HxShelf extends HTMLElement{
 connectedCallback(){
  const d=SHELVES[this.getAttribute('set')];
  this.attachShadow({mode:'open'}).innerHTML=`<style>${RESET}
  :host{display:flex;box-sizing:border-box;min-width:0;height:144px;border-bottom:2px solid #000;background:#2e2e2e;font-size:21px}
  .grip{width:20px;flex:none;border-right:1px solid #000;background:linear-gradient(#555,#3c3c3c);padding:7px 1px}
  .body{flex:1;min-width:0;display:flex;flex-direction:column;overflow:hidden}
  .tabs{height:46px;flex:none;display:flex;border-top:3px solid #0c0c0c;line-height:43px}
  .tabs button{padding:0 20px;border-right:1px solid #000;border-bottom:2px solid #000;height:43px;background:#2d2d2d}
  .tabs button[aria-selected=true]{background:linear-gradient(#545454,#4a4a4a);border-bottom:0;padding:0 19px 0 18px}
  .rest{flex:1;display:flex;align-items:center;justify-content:flex-end;gap:20px;padding-right:10px;border-bottom:2px solid #000;border-left:6px double #111}
  .bleed .rest{padding-right:0}.bleed .tabs button[aria-selected=true]{padding:0 18px 0 17px}
  .tools{flex:1;min-width:0;display:flex;padding-left:41px;background:linear-gradient(#4a4a4a,#393939);position:relative}
  .tool{flex:none;min-width:102px;padding:6px 13px 0;display:flex;flex-direction:column;align-items:center;justify-content:flex-start;line-height:24px}
  .tool span{margin-top:5px;white-space:pre;text-align:center}
  .tool.two{width:166px;line-height:23px}.tool.two span{margin-top:-10px;position:relative}
  .tool.cut{padding-right:0;align-items:flex-start;min-width:0}
  .tool.cut hx-icon{margin-left:25px}
  .more{position:absolute;right:12px;top:40px;width:18px;height:18px;background:#8a8a8a;clip-path:polygon(35% 0,90% 50%,35% 100%)}
  .bleed .more{right:1px}
  </style>${d.grip?`<div class="grip">${ic('ups',16)}</div>`:''}
  <div class="body ${d.grip?'':'bleed'}"><div class="tabs" role="tablist">${d.tabs.map((t,i)=>`<button role="tab" aria-selected="${!i}">${t}</button>`).join('')}<div class="rest">${ic('plus',26)}${ic('down',22)}</div></div>
  <div class="tools">${d.tools.map(([l,n,c])=>`<button class="tool ${c||''}">${n?ic(n,52):'<hx-icon size="52"></hx-icon>'}<span>${l}</span></button>`).join('')}<i class="more"></i></div></div>`;
 }
}
const SHELVES={
 create:{grip:true,tabs:['Create','Modify','Model','Poly…','Defo…','Text…','Rigg…','Char…','Cons…','Hair…','Guid…','Terr…'],
  tools:[['Box','box'],['Sphere','sphere'],['Tube','tube'],['Torus','torus'],['Grid','grid'],['Null','nullx'],['Line','line'],['Circle','circle'],['Curve Bezier','curve'],['Draw Curve','draw'],['Path','path'],['Spray P','spray','cut']]},
 light:{tabs:['Light…','Colli…','Parti…','Grains','Vell…','Rigi…','Parti…','Visc…','Oceans','Pyro…','FEM','Wires'],
  tools:[['Camera','camera'],['Point Light','point'],['Spot Light','spot'],['Area Light','area'],['Geometry\nLight','geolight','two'],['Volume Light','volume'],['Distant Light','distant'],['Environment\nLight','env','two'],['Sky Light','sky'],['G','','cut']]}
};
customElements.define('hx-shelf',HxShelf);

/* ---------- pane tabs ---------- */
class HxTabs extends HTMLElement{
 connectedCallback(){
  const tabs=JSON.parse(this.getAttribute('tabs'));
  this.attachShadow({mode:'open'}).innerHTML=`<style>${RESET}
  :host{display:flex;height:48px;flex:none;background:#2e2e2e;font-size:24px;line-height:46px;overflow:hidden}
  .t{display:flex;align-items:center;justify-content:space-between;gap:7px;padding:0 7px 0 16px;border-right:3px solid #1b1b1b;background:#2d2d2d;border-bottom:1px solid #1f1f1f}
  .t:first-child{background:#494949;border:0;padding-right:8px}
  .it{font-style:italic}
  .sp{flex:1}.add{margin:0 14px}.end{display:flex;align-items:center;gap:18px;padding-right:11px}
  :host([bleed]) .end{padding-right:0;margin-right:-2px}
  </style>${tabs.map(([n,w,it])=>`<div class="t" style="min-width:${w}px"><button class="${it?'it':''}">${n}</button><button>${ic('x',24)}</button></div>`).join('')}<button class="add">${ic('plus',26)}</button><span class="sp"></span><div class="end">${ic('win',31)}${ic('down',24)}</div>`;
 }
}
customElements.define('hx-tabs',HxTabs);

/* ---------- path bar ---------- */
class HxPath extends HTMLElement{
 connectedCallback(){
  this.attachShadow({mode:'open'}).innerHTML=`<style>${RESET}
  :host{display:flex;align-items:center;height:86px;flex:none;background:linear-gradient(#4a4a4a,#3b3b3b);border-bottom:2px solid #0b0b0b;font-size:26px;line-height:54px;color:#e4e4e4;padding:0 7px 0 6px;overflow:hidden}
  .nav{display:flex;gap:11px;width:130px;flex:none}
  .bar{flex:1;min-width:0;height:60px;border:2px solid #000;background:linear-gradient(#424242,#3a3a3a);box-shadow:inset 0 1px #666;display:flex;align-items:center}
  .seg{gap:6px;padding-left:6px}.seg+svg+.seg{padding:0}
  .chev{width:18px;height:56px;margin:0 6px;flex:none}
  .dd{width:19px;height:56px;margin-left:auto;background:linear-gradient(#333,#252525)}
  .dd::after{content:"";border:6px solid transparent;border-top:13px solid #8a8a8a;border-bottom:0}
  .tools{display:flex;gap:6px;padding-left:20px;flex:none}
  :host([bleed]){padding-right:0}:host([bleed]) .tools{margin-right:-5px}
  </style><div class="nav"><button>${ic('back',52,'right')}</button><button>${ic('fwd',50)}</button></div>
  <div class="bar"><button class="seg">${ic('clap',50)}obj</button><svg class="chev" viewBox="0 0 18 56"><path d="M2 0L16 28 2 56" fill="none" stroke="#151515" stroke-width="1.500"/></svg><button class="seg">${ic('geo',51)}geo1</button><button class="dd"></button></div>
  <div class="tools"><button>${ic('pin',50)}</button><button>${ic('rings',52)}</button><slot></slot></div>`;
 }
}
customElements.define('hx-path',HxPath);

/* ---------- 3D viewport ---------- */
class HxViewport extends HTMLElement{
 connectedCallback(){
  const K=1.759,H=395,W0=.001944,AX=-.0002285,AZ=-.000124,N0=W0*398;
  const pt=(X,Z,k=0)=>{const w=W0+AX*X+AZ*Z;const n=N0+AX*-32*X+AZ*2072*Z+k*426,y=1+H*w+k*2529,q=w+k;return [n/q*K,y/q*K]};
  const f=p=>p[0].toFixed(1)+' '+p[1].toFixed(1);
  const far=1/68,near=1/920;let minor='',major='';
  const add=(a,b,i)=>{if((a[0]<90&&b[0]<90)||(a[0]>1410&&b[0]>1410))return;const s='M'+f(a)+'L'+f(b);if(i%5)minor+=s;else major+=s};
  for(let i=-900;i<=60;i++){const X=i/5;const z=w=>(w-W0-AX*X)/AZ;add(pt(X,z(far)),pt(X,z(near)),i)}
  for(let i=-1400;i<=700;i++){const Z=i/5;const x=w=>(w-W0-AZ*Z)/AX;add(pt(x(far),Z),pt(x(near),Z),i)}
  let discs='';
  for(const k of [0,-.000118,-.0002365,-.0003547]){
   const c=pt(0,0,k),v=[];for(let j=0;j<9;j++){const a=(28+j*40)*Math.PI/180,p=pt(.79*Math.cos(a),.79*Math.sin(a),k);v.push([p[0],c[1]+(p[1]-c[1])*1.04-2])}
   c[1]-=2;
   discs+=`<path d="M${v.map(f).join('L')}Z" fill="#9b9b9b" stroke="#8c8c8c" stroke-width="2"/><path d="${v.map(p=>'M'+f(c)+'L'+f(p)).join('')}" stroke="#7c7c7c" stroke-width="2.500" fill="none"/>`;
  }
  const lab=(x,y,t,c,r,s)=>`<text x="${x}" y="${y}" fill="${c}" font-size="${s}" transform="rotate(${r} ${x} ${y})">${t}</text>`;
  this.attachShadow({mode:'open'}).innerHTML=`<style>${RESET}
  :host{display:block;position:relative;background:#000;overflow:hidden;min-width:0}
  svg.s{position:absolute;inset:0;width:100%;height:100%;display:block}
  .hd{position:relative;display:flex;align-items:flex-start;gap:8px;padding:15px 14px 0 27px}
  .hd hx-icon{margin-top:8px;opacity:.8}
  b{color:#fff;font-size:26px;line-height:55px;margin:0 auto 0 15px}
  .pill{height:43px;padding:0 18px;border:2px solid #777;border-radius:12px;background:#1c1c1c;color:#c8c8c8;font-size:26px;line-height:38px}
  .pill::after{content:"";width:5px;height:3px;background:#aaa;margin:8px 0 0 3px}
  .ed{position:absolute;right:33px;bottom:21px;font-size:26px;line-height:40px;color:#c8c21a}
  </style><svg class="s" viewBox="96 360 1306 1914" preserveAspectRatio="xMidYMin slice">
  <defs><linearGradient id="fog" x1="0" y1="690" x2="0" y2="960" gradientUnits="userSpaceOnUse"><stop offset="0" stop-color="#000"/><stop offset=".1" stop-color="#080a0d"/><stop offset=".28" stop-color="#1a1e25"/><stop offset=".45" stop-color="#252b33"/><stop offset=".55" stop-color="#252b33" stop-opacity=".8"/><stop offset="1" stop-color="#252b33" stop-opacity="0"/></linearGradient></defs>
  <path d="${minor}" stroke="#2d343d" stroke-width="1.400" fill="none"/><path d="${major}" stroke="#343c46" stroke-width="2.800" fill="none"/>
  <rect x="96" y="360" width="1306" height="600" fill="url(#fog)"/>
  ${lab(803,1714,'1','#6a3634',35,14)}${lab(930,1862,'2','#8a4440',55,24)}${lab(1108,2068,'3','#9a4a44',60,28)}${lab(490,1670,'1','#3c4878',60,12)}${lab(256,1738,'2','#44508a',40,18)}${lab(864,1556,'1','#2c3660',60,12)}${lab(1026,1504,'2','#2c3660',60,12)}${lab(1170,1462,'3','#2c3660',60,12)}
  ${discs}
  <path d="M120 2252V2232" stroke="#7dfa7d" stroke-width="2"/><path d="M120 2252L113 2254" stroke="#7d7dfa" stroke-width="2"/><path d="M120 2252L130 2260" stroke="#fa7d7d" stroke-width="2"/>
  <text x="121" y="2231" fill="#7dfa7d" font-size="27">y</text><text x="103" y="2254" fill="#7d7dfa" font-size="27">z</text><text x="130" y="2257" fill="#fa7d7d" font-size="27">x</text>
  </svg><div class="hd">${ic('camera',42)}<b>View</b><button class="pill">Persp</button><button class="pill">No cam</button></div><div class="ed">Indie Edition</div>`;
 }
}
customElements.define('hx-viewport',HxViewport);

/* ---------- scene pane ---------- */
const B=(n,c='',t='')=>`<button class="${c}">${ic(n,c.includes('lg')?58:c.includes('big')?52:48,t)}</button>`;
class HxScene extends HTMLElement{
 connectedCallback(){
  this.attachShadow({mode:'open'}).innerHTML=`<style>${RESET}
  :host{display:flex;flex-direction:column;min-width:0;min-height:0;background:#3c3c3c}
  .view{width:20px;flex:none}
  .wide{margin-right:4px}
  .tb{display:flex;height:82px;flex:none;background:#303030;border-bottom:2px solid #060606;align-items:center;border-top:1px solid #555}
  .g{width:26px;align-self:stretch;border-right:1px solid #000;background:linear-gradient(#505050,#383838);padding:6px 3px;flex:none}
  .tb .in{flex:1;display:flex;align-items:center;padding:0 4px 0 3px}
  .tb button{width:59px;height:59px}.tb .s{width:1px;height:60px;background:#4c4c4c;margin:0 12px}
  .tb .v{width:82px}.tb .v+.s{margin-left:0;margin-right:9px}.tb .on+.s{margin:0}.tb .stop+.s{margin-right:10px}
  .sp1{flex:317}.sp2{flex:323}
  .on{background:linear-gradient(#5b7290,#7089a8);box-shadow:inset 0 0 0 1px #3a4858}
  .mid{flex:1;min-height:0;display:grid;grid-template-columns:85px minmax(0,1fr) 67px}
  .lt,.rt{display:flex;flex-direction:column;align-items:center;background:#3c3c3c;min-height:0;overflow:hidden}
  .cap{align-self:stretch;height:25px;flex:none;background:linear-gradient(#4c4c4c,#353535);border-bottom:1px solid #111;padding:1px 5px}
  .lt>button{width:70px;height:70px}.lt hr,.rt hr{width:60px;height:1px;border:0;background:#555;flex:none}
  .grp{margin:14px 0;width:68px;height:186px;flex:none;border:2px solid #222;border-radius:3px;display:flex;flex-direction:column;align-items:center;background:#434343}
  .grp button{width:58px;height:61px}
  .lt hr{margin:9px 0 11px}.lt .grp+hr{margin:0 0 10px}.lt .x{flex:1}.lt .x~button{height:64px}.lt{padding-bottom:6px}
  .rt>button{width:60px;height:61px;margin-bottom:1px}.rt>.cap+button{margin-top:4px}.rt>.gap{margin-top:4px}
  .rt hr{margin:0 0 10px}.rt>.k{margin-bottom:2px}.rt .k+hr{margin:14px 0 16px}.rt .pin+hr{margin:14px 0 10px}
  .rt .cap{display:flex;justify-content:flex-end}
  </style>
  <hx-tabs tabs='[["Scene View",210],["Animation E…",220],["Render View",221],["Composite Vi…",227],["Motion FX V…",213],["Geometry Sp…",227]]'></hx-tabs>
  <hx-path><span class="view"></span><span class="wide">${ic('cube',50,'down')}</span>${ic('shapes',52,'down')}${ic('white',53,'down')}</hx-path>
  <div class="tb"><div class="g">${ic('ups',18)}</div><div class="in">${B('dots','','down')}<span class="sp1"></span>${B('orbit','v','down')}${B('pan','v','down')}${B('dolly','v','down')}<i class="s"></i>${B('cameraw','on big')}<i class="s"></i>${B('zoomf','big')}<i class="s"></i>${B('stop0','big stop')}<i class="s"></i>${B('robot','big')}${B('gearwin','big')}<span class="sp2"></span>${B('people','','down')}${B('help','big')}</div></div>
  <div class="mid"><div class="lt"><div class="cap">${ic('lefts',22)}</div><div class="grp">${B('cone','big','right')}${B('grid4','on big','dark')}${B('slab','big','right')}</div><hr>${B('arrow','big','right')}${B('lock','on')}${B('move','lg')}${B('rotate','lg')}${B('scale','lg')}${B('pose','big')}${B('handle','lg','right')}<hr>${B('maggrid','lg','right')}${B('magcurve','lg','right')}${B('magpt','lg','right')}${B('mag','lg','right')}<hr>${B('camera','on lg')}${B('globe','lg','right')}${B('lens','lg')}<span class="x"></span>${B('notebook','','right')}${B('reel','big','right')}</div>
  <hx-viewport></hx-viewport>
  <div class="rt"><div class="cap">${ic('rights',22)}</div>
  ${B('gridp','on big','dark')}${B('greeng','big','right')}${B('padlock')}${B('bulbx','big')}${B('ball','big','right')}${B('bulb','on big','dark')}${B('bulbp','big','right')}${B('bulbr','big','right')}${B('checker','on gap','dark')}${B('glasses','big','down')}${B('glassplay','big','right')}<hr>
  ${['dot','dotline','comet','num12','plane','pl12','curve2'].map(n=>B(n,'k')).join('')}${B('flip','on k')}${B('check2','k','right')}${['diamond','greenq','spokes','film'].map(n=>B(n,'k big')).join('')}${B('image','on k','dark')}<hr>${B('marker','on pin','dark')}<hr>${B('info','k big')}${B('panes','on')}${B('eye','','right')}</div></div>`;
 }
}
customElements.define('hx-scene',HxScene);

/* ---------- parameter pane ---------- */
const MONO='"Liberation Mono",monospace';
class HxParams extends HTMLElement{
 connectedCallback(){
  const P=[['rad','0.798',40,1],['res div','1',0,0,4],['bridge res','21',37,1,50],['bridge sc','3.07',23,1],['remesh size','0.1',10,0],['blur ite','386',77,1,50],['thickness','0.0244',24.5,1]];
  this.attachShadow({mode:'open'}).innerHTML=`<style>${RESET}
  :host{display:flex;flex-direction:column;flex:none;background:#3b3b3b;font-size:26px;overflow:hidden}
  .hd{height:66px;flex:none;display:flex;align-items:center;border-bottom:2px solid #0d0d0d;padding:1px 0 0 10px;gap:8px}
  .hd b{font-size:26px;line-height:60px;margin-right:4px}
  .hd input{flex:1;min-width:0;height:44px}
  .hd .t{display:flex;gap:16px;width:250px;flex:none;padding-left:8px;align-items:center}
  input[type=text]{background:#131313;border:2px solid #2a2a2a;color:#f2f2f2;font-family:${MONO};font-size:29px;padding:5px 2px 0}
  .rows{padding:2px 14px 0 0}
  .r{display:grid;grid-template-columns:356px 212px minmax(0,1fr);align-items:center;height:59px}
  .r>label:first-child{text-align:right}
  .n>input[type=text]{height:54px;width:186px;justify-self:end}
  .c{height:51px;grid-template-columns:356px minmax(0,1fr);column-gap:26px;color:#8b8b8b}.c label{display:flex;align-items:center;gap:20px;font-size:27px}
  .code{height:50px;grid-template-columns:356px minmax(0,1fr);column-gap:26px}.code input{height:44px;width:100%}
  .bd{font-weight:700}
  input[type=checkbox]{appearance:none;width:32px;height:32px;background:#343434}
  input[type=checkbox]:checked::after{content:"";display:block;width:32px;height:30px;background:#9a9a9a;clip-path:polygon(10% 50%,24% 44%,42% 62%,82% 6%,92% 10%,48% 92%,38% 92%)}
  .sl{position:relative;display:flex;padding-left:6px}
  input[type=range]{appearance:none;width:100%;height:50px;background:linear-gradient(90deg,#2a5da6 var(--v),transparent var(--v)) 0 24px/100% 3px no-repeat,linear-gradient(#0b0b0b,#0b0b0b) 0 23px/100% 5px no-repeat}
  input[type=range]::-webkit-slider-thumb{appearance:none;width:5px;height:50px;background:#8e8e8e;border:1px solid #555}
  .tk::after{content:"";position:absolute;left:7px;right:0;top:28px;height:7px;background:repeating-linear-gradient(90deg,#666 0 1px,transparent 1px calc(100%/var(--n)));pointer-events:none}
  </style><div class="hd">${ic('nullring',48,'down')}<b>Null</b><input type="text" value="CONTROLLER" aria-label="CONTROLLER"><div class="t">${ic('gear',50,'down')}${ic('search',50)}${ic('info',48)}${ic('help',48)}</div></div>
  <div class="rows"><div class="r c"><span></span><label><input type="checkbox" checked disabled>Copy Input (Note: Input will be still cooked if disabled)</label></div>
  <div class="r c"><span></span><label><input type="checkbox" disabled>Cache Input</label></div>
  <div class="r code"><label for="code">code</label><input id="code" type="text" class="bd" value="AbCAbCAbC"></div>
  ${P.map(([l,v,p,b,n],i)=>`<div class="r n"><label for="p${i}">${l}</label><input id="p${i}" type="text" class="${b?'bd':''}" value="${v}"><div class="sl ${n?'tk':''}" style="--n:${n||1};--v:${p}%"><input type="range" min="0" max="100" step="0.5" value="${p}" aria-label="${l}"></div></div>`).join('')}</div>`;
 }
}
customElements.define('hx-params',HxParams);

/* ---------- node network ---------- */
class HxNetwork extends HTMLElement{
 connectedCallback(){
  const dot=(x,y)=>`<circle cx="${x}" cy="${y}" r="5" fill="#b4b4b4"/>`;
  const mini=(n,x,y,s=25)=>`<svg x="${x-s/2}" y="${y-s/2}" width="${s}" height="${s}" viewBox="0 0 48 48">${ICONS[n]}</svg>`;
  const T=(x,y,t,c='#cfcfcf',s=20,e='')=>`<text x="${x}" y="${y+s*.36}" font-size="${s}" fill="${c}" ${e}>${t}</text>`;
  const bars=(x,y,c)=>`<path d="M${x-35} ${y-14}L${x-38} ${y+14}M${x-21} ${y-14}L${x-24} ${y+14}M${x+24} ${y-14}L${x+21} ${y+14}M${x+38} ${y-14}L${x+35} ${y+14}" stroke="${c}" fill="none"/>`;
  const node=(x,y,i,ins,label,col='#cdcdcd',st='#8c8c8c')=>`<rect x="${x-48}" y="${y-14}" width="97" height="29" rx="4" fill="${col}" stroke="${st}"/>${bars(x,y,st)}${mini(i,x,y)}${ins.map(d=>dot(x+d,y-22)).join('')}${dot(x,y+23)}${label?T(x+58,y,label):''}`;
  const OR='#ffa71c',OS='#b87410';
  const lockg=(x,y)=>`<path d="M${x-3} ${y-1}V${y-5}Q${x} ${y-8} ${x+4} ${y-5}V${y}" fill="none" stroke="#5c8068" stroke-width="1.500"/><rect x="${x-6}" y="${y}" width="12" height="6" fill="none" stroke="#5c8068" stroke-width="1.500"/>`;
  const wr=(x,y,label,dim)=>`<path d="M${x-48} ${y-17}Q${x-20} ${y-22} ${x} ${y-16}T${x+48} ${y-16}V${y+15}Q${x+20} ${y+20} ${x} ${y+14}T${x-48} ${y+15}Z" fill="#cdcdcd" stroke="#8c8c8c"/>${bars(x,y,'#8c8c8c')}${mini('n_hat',x,y)}${dot(x-29,y-27)}${dot(x-10,y-26)}${dot(x+9,y-22)}${dot(x+29,y-20)}${dot(x,y+23)}${T(x+58,y,label)}${T(x+58,y-23,'Attribute Wrangle',dim,17)}${lockg(x+69,y+22)}`;
  const fe=(x,y,d)=>`<path d="M${x-48} ${y-14}L${x} ${y-14+8*d} ${x+48} ${y-14}V${y+14}L${x} ${y+14+8*d} ${x-48} ${y+14}Z" fill="#c46a04" stroke="#8a4c06" stroke-width="1.500" stroke-linejoin="round"/><path d="M${x-34} ${y-11}L${x-37} ${y+16}M${x-20} ${y-9}L${x-24} ${y+18}M${x+24} ${y-10}L${x+20} ${y+18}M${x+38} ${y-12}L${x+34} ${y+16}" stroke="#8a4c06" fill="none"/>${mini('n_brick',x,y+4*d)}`;
  const W=d=>`<path d="${d}"/>`;
  const box=(x,y,w,h)=>`<rect x="${x}" y="${y}" width="${w}" height="${h}" rx="8" fill="#5a5a5a" stroke="#6e6e6e"/><path d="M${x} ${y+29}V${y+8}Q${x} ${y} ${x+8} ${y}H${x+w-8}Q${x+w} ${y} ${x+w} ${y+8}V${y+29}Z" fill="#737373"/><path d="M${x} ${y+29}H${x+w}M${x+29} ${y}V${y+29}" stroke="#858585"/><path d="M${x+10} ${y+14}H${x+25}" stroke="#000" stroke-width="3"/><path d="M${x+10} ${y+16}H${x+25}" stroke="#eee"/>`;
  const xp=(x,y)=>`M${x} ${y-11}L${x+16} ${y-25}Q${x+26} ${y-29} ${x+34} ${y-19}Q${x+39} ${y-9} ${x+24} ${y}Q${x+39} ${y+9} ${x+34} ${y+19}Q${x+26} ${y+29} ${x+16} ${y+25}L${x} ${y+11} ${x-16} ${y+25}Q${x-26} ${y+29} ${x-34} ${y+19}Q${x-39} ${y+9} ${x-24} ${y}Q${x-39} ${y-9} ${x-34} ${y-19}Q${x-26} ${y-29} ${x-16} ${y-25}Z`;
  const xs=(x,y,f,s,sw)=>`<path d="${xp(x,y)}" fill="${f}" stroke="#111" stroke-width="${sw+2}"/><path d="${xp(x,y)}" fill="${f}" stroke="${s}" stroke-width="${sw}"/><path d="M${x-24} ${y-20}L${x-8} ${y}M${x+24} ${y-20}L${x+8} ${y}M${x-24} ${y+20}L${x-8} ${y}M${x+24} ${y+20}L${x+8} ${y}" stroke="#0004"/><circle cx="${x}" cy="${y}" r="8" fill="${f}" stroke="#a9b9cc" stroke-width="3"/>`;
  this.attachShadow({mode:'open'}).innerHTML=`<style>
  :host{display:block;flex:1;min-height:0;overflow:hidden;background:#303030}
  svg.n{display:block;width:100%;height:100%}
  </style><svg class="n" viewBox="1486 1211 1272 1063" preserveAspectRatio="xMinYMin slice">
  ${T(1984,1273,'Indie Edition','#474747',48)}${T(2469,1283,'Geometry','#4d4d4d',56,'font-weight="700"')}
  <rect x="2334" y="1180" width="277" height="69" rx="8" fill="#5c5c5c" stroke="#6c6c6c"/>
  ${box(1794,1453,543,592)}${box(2390,1357,600,833)}${box(2265,2250,271,80)}
  <path d="M2428 1391H2758V2072L2688 2185H2573Q2566 2185 2560 2180L2488 2065 2414 1458V1407Q2414 1391 2428 1391Z" fill="#625d57"/>
  <path d="M2758 1391H2428Q2414 1391 2414 1407V1458L2488 2065 2560 2180Q2566 2185 2573 2185H2688Q2694 2184 2698 2179L2758 2072" fill="none" stroke="#9a6c34" stroke-width="1.500"/>
  <circle cx="2086" cy="2010" r="64" fill="#78446c"/><circle cx="2086" cy="2010" r="56.500" fill="#41689c"/><circle cx="2086" cy="2010" r="43.500" fill="#9070cc"/>
  <clipPath id="cb"><path d="M2000 1900H2200V2045H2000Z"/></clipPath><g clip-path="url(#cb)"><path d="M2000 1940H2180V2045H2000Z" fill="#5a5a5a"/><circle cx="2086" cy="2010" r="64" fill="#7c6078"/><circle cx="2086" cy="2010" r="56.500" fill="#647690"/><circle cx="2086" cy="2010" r="43.500" fill="#8c7ca8"/></g>
  <g fill="none" stroke="#5f83ad" stroke-width="1.300">
  ${W('M2424 1248Q2422 1272 2396 1272C2260 1276 2168 1400 2168 1490V1870')}
  ${W('M2424 1248Q2427 1272 2452 1272Q2477 1280 2477 1330V1400')}
  ${W('M1937 1543Q1937 1545 1945 1545H2300Q2308 1544 2312 1532')}
  <path d="M2312 1532Q2316 1519 2328 1519H2680Q2686 1520 2687 1526" stroke="#6a7480"/>
  ${W('M1937 1543Q1930 1568 1905 1568Q1881 1567 1881 1590V1608')}
  ${W('M1937 1543Q1937 1567 1953 1568Q1966 1570 1966 1582V1693')}
  ${W('M1881 1660Q1886 1677 1902 1677H1920Q1935 1677 1938 1693')}
  ${W('M1952 1754Q1953 1769 1943 1770Q1932 1772 1932 1786')}
  ${W('M1952 1838Q1953 1857 1943 1858Q1932 1861 1932 1876')}
  ${W('M1952 1929Q1959 1954 1980 1954H2034Q2060 1955 2066 1985')}
  <path d="M2177 1930Q2172 1955 2150 1955H2125Q2108 1957 2106 1974" stroke-dasharray="2 3"/>
  ${W('M2086 2037Q2092 2062 2110 2062H2230C2290 2064 2339 2110 2339 2190V2274')}
  ${W('M2477 1455Q2478 1480 2500 1480Q2522 1482 2522 1505V1620')}
  ${W('M2729 1455Q2725 1480 2700 1480H2620C2570 1482 2541 1520 2541 1565V1620')}
  ${W('M2687 1575Q2680 1599 2655 1599H2590Q2566 1600 2561 1624M2687 1575Q2694 1600 2716 1600H2758')}
  ${W('M2551 1676Q2555 1693 2575 1693H2758')}
  <path d="M2551 1676V1695Q2552 1701 2560 1702Q2570 1703 2570 1712V2012" stroke-dasharray="2 2"/>
  ${W('M2687 1772Q2688 1797 2706 1797Q2724 1799 2725 1822')}
  ${W('M2744 1874Q2744 1900 2728 1901Q2711 1903 2711 1930')}
  ${W('M2730 1983Q2728 1997 2712 1997H2552Q2536 1998 2532 2012')}
  ${W('M2551 2063Q2555 2088 2580 2088Q2610 2088 2610 2110V2126')}
  ${W('M2629 2175Q2622 2200 2600 2200H2455C2400 2202 2372 2240 2366 2274')}
  </g>
  <path d="M2304 1540L2312 1525 2320 1540Z" fill="#6f7b8c"/>
  ${xs(2424,1207,'#70c92c','#4d9c18',1)}${dot(2424,1243)}${T(2469,1211,'INFO')}
  ${xs(1622,1396,'#1a5cb4','#ffd500',3)}${dot(1622,1365)}${dot(1622,1428)}${T(1665,1373,'Null','#707070',17)}${T(1665,1396,'CONTROLLER')}
  ${node(1937,1516,'n_circle',[],'circle6')}${node(1881,1634,'n_transform',[0],'transform6')}
  <path d="M1914 1703Q1914 1698 1920 1697Q1952 1690 1984 1697Q1992 1698 1991 1703Q1990 1708 1984 1705Q1952 1699 1920 1705Q1914 1708 1914 1703Z" fill="#b4b4b4" stroke="#b4b4b4"/>
  <path d="M1903 1723Q1903 1711 1918 1709Q1952 1704 1986 1709Q2001 1711 2001 1723Q2001 1736 1986 1738Q1952 1742 1918 1738Q1903 1736 1903 1723Z" fill="#cdcdcd" stroke="#8c8c8c"/>${bars(1952,1723,'#8c8c8c')}${mini('n_merge',1952,1723)}${dot(1952,1750)}${T(2010,1723,'merge5')}
  ${node(1952,1812,'n_skin',[-20,20],'skin3')}${node(1952,1902,'n_fuse',[-20,20],'fuse3')}${wr(2177,1903,'disc_pos','#6b6b6b')}
  ${node(2086,2010,'n_cube',[-20,20],'copytopoints3',OR,OS)}<path d="M2110 1997H2121L2118 2024H2107Z" fill="#dd7bd8"/><path d="M2123 1997H2130Q2134 1997 2134 2001V2020Q2134 2024 2130 2024H2120Z" fill="#04b0f4"/>
  ${fe(2477,1420,1)}${dot(2477,1405)}${dot(2477,1451)}${T(2535,1402,'Block Begin','#55524f',17)}${T(2535,1424,'foreach_begin1')}${T(2535,1458,'Point : 8','#6f9fdc',17)}
  ${fe(2729,1420,1)}${dot(2729,1405)}${dot(2729,1451)}
  ${node(2687,1548,'n_color',[0],'co')}${lockg(2757,1572)}${wr(2551,1650,'ang','#55524f')}${node(2687,1746,'n_line',[],'li')}
  ${node(2744,1848,'n_cube',[-20],'',OR,OS)}${node(2730,1956,'n_skin',[-20,20],'')}${node(2551,2037,'n_cube',[-20,20],'copytopoints4',OR,OS)}
  ${fe(2629,2152,-1)}${dot(2610,2129)}${dot(2649,2129)}${dot(2629,2171)}${T(2688,2129,'Block En','#55524f',17)}${T(2688,2152,'foreach')}${T(2688,2186,'Merge : 1','#6f9fdc',17)}
  <rect x="1757.500" y="1417.500" width="603" height="655" fill="none" stroke="#111" stroke-opacity=".5" stroke-width="5" transform="translate(1 3)"/><rect x="1757.500" y="1417.500" width="603" height="655" fill="none" stroke="#ee6352" stroke-width="5"/>
  </svg>`;
 }
}
customElements.define('hx-network',HxNetwork);

/* ---------- right column: parameters over network ---------- */
class HxRight extends HTMLElement{
 connectedCallback(){
  this.attachShadow({mode:'open'}).innerHTML=`<style>${RESET}
  :host{display:flex;flex-direction:column;min-width:0;min-height:0;background:#3b3b3b;border-left:1px solid #2a2a2a}
  hx-params{height:716px}
  .split{height:17px;flex:none;background:#4a4a4a;border-top:1px solid #6a6a6a;display:flex;align-items:center;justify-content:center;gap:45px;padding-left:14px}
  .split i{border:7px solid transparent;border-bottom:8px solid #8a8a8a;border-top:0}.split i.d{border-top:8px solid #8a8a8a;border-bottom:0}
  .split u{width:50px;height:6px;background:repeating-linear-gradient(90deg,#777 0 1px,transparent 1px 3px)}
  .menu{height:66px;flex:none;display:flex;align-items:center;background:linear-gradient(#3d3d3d,#353535);border-bottom:2px solid #0b0b0b;font-size:29px;line-height:60px;overflow:hidden}
  .g{width:26px;align-self:stretch;border-right:1px solid #000;background:linear-gradient(#505050,#383838);padding:6px 3px;margin-right:64px;flex:none}
  nav{display:flex;gap:37px;margin-right:25px}nav button:nth-last-child(-n+2){margin-left:-6px}
  .ics{display:flex;gap:9px;flex:none}.cut{width:20px;overflow:hidden;justify-content:flex-start}
  .more{width:10px;height:18px;flex:none;background:#8a8a8a;clip-path:polygon(0 0,80% 50%,0 100%);margin-left:16px}
  </style>
  <hx-tabs bleed tabs='[["CONTROLLER",234,1],["Performance Monitor",310]]'></hx-tabs><hx-path bleed></hx-path><hx-params></hx-params>
  <div class="split"><i></i><u></u><i class="d"></i></div>
  <hx-tabs bleed tabs='[["/obj/geo1",195,1],["Tree View",195],["Material Palette",255],["Asset Browser",237]]'></hx-tabs><hx-path bleed></hx-path>
  <div class="menu"><div class="g">${ic('ups',18)}</div><nav>${['Add','Edit','Go','View','Tools','Layout','Labs','Help'].map(m=>`<button>${m}</button>`).join('')}</nav><div class="ics">${['tools','tree','list','palette','shapes9','netwin'].map(n=>`<button>${ic(n,51)}</button>`).join('')}<button class="cut">${ic('note',50)}</button></div><i class="more"></i></div>
  <hx-network></hx-network>`;
 }
}
customElements.define('hx-right',HxRight);

/* ---------- playbar ---------- */
class HxPlaybar extends HTMLElement{
 connectedCallback(){
  const ticks=[...Array(10)].map((_,i)=>`<path d="M${1+i*159} 45V70" stroke="#8a8a8a" stroke-width="2"/>${i===5?'':`<text x="${i*159}" y="26" font-size="23" fill="#757575">${i+1}</text>`}`).join('');
  this.attachShadow({mode:'open'}).innerHTML=`<style>${RESET}
  :host{display:flex;box-sizing:border-box;height:152px;flex:none;background:#2e2e2e;border-top:2px solid #5a5a5a;overflow:hidden;font-size:26px}
  .g{width:21px;flex:none;background:linear-gradient(#4c4c4c,#333);border-right:2px solid #000}
  .l{flex:1;min-width:0;display:flex;flex-direction:column;padding:0 0 0 7px}
  .row{display:flex;align-items:center;height:68px;flex:none}
  .a{margin-top:23px}.b{margin-top:19px;height:60px}
  button.k{width:68px;height:68px;background:linear-gradient(#505050,#3e3e3e);border-right:1px solid #111;border-bottom:2px solid #111}
  button.k.on{background:linear-gradient(#5b7290,#7089a8)}
  button.h{width:35px}button.d{width:57px;background:#363636}.d.p{margin-left:6px}.d.q{margin-right:10px}
  input[type=text]{background:#131313;border:2px solid #262626;color:#f2f2f2;font-family:${MONO};font-size:28px;padding:2px 1px 0;height:70px}
  .f{width:117px;margin:0 2px 0 3px}.r{width:106px;margin-right:5px}.b input{height:60px;padding:0 3px}.dim{background:#202020!important}.r:last-child{margin:0}
  .time{flex:1;min-width:0;margin-left:7px;height:96px;overflow:visible;display:block;align-self:flex-start;margin-top:-23px}
  .rng{flex:1;height:12px;background:#737373;margin:0 5px 0 0;position:relative}
  .rng::before,.rng::after{content:"";position:absolute;top:-9px;width:14px;height:30px;background:#aaa;left:-3px;clip-path:polygon(0 0,100% 50%,0 100%)}
  .rng::after{left:auto;right:0;clip-path:polygon(100% 0,0 50%,100% 100%)}
  .key{width:157px;flex:none;display:flex;align-items:center;justify-content:flex-start;padding:26px 0 0 7px}
  .key .c{width:100px;height:100px;border-radius:50%;background:linear-gradient(#343434 82%,#242424 82%);border:1px solid #1a1a1a;z-index:1}
  .key .dd{width:56px;height:56px;margin-left:-13px;background:linear-gradient(#3c3c3c,#2a2a2a);border:1px solid #1c1c1c}
  .dd::after{content:"";border:7px solid transparent;border-top:13px solid #8a8a8a;border-bottom:0}
  .e{width:447px;flex:none;display:grid;grid-template-columns:58px 1fr;grid-auto-rows:59px;gap:6px 9px;padding-top:25px}
  .e button,.e .sel{background:linear-gradient(#505050,#3c3c3c);border-bottom:2px solid #111;width:auto}
  .e .t{justify-content:flex-start;padding-left:43px;position:relative}
  .e .t::after{content:"";border:8px solid transparent;border-bottom:15px solid #8a8a8a;border-top:0;margin-left:auto;margin-right:14px}
  .sel{display:flex;align-items:center}.sel select{appearance:none;flex:1;height:57px;padding-left:32px}
  .sel i{width:18px;height:57px;background:#333;display:flex;flex-direction:column;align-items:center;justify-content:center;gap:5px;padding-left:7px}
  .sel i::before{content:"";border:6px solid transparent;border-bottom:12px solid #8a8a8a;border-top:0}.sel i::after{content:"";border:6px solid transparent;border-top:12px solid #8a8a8a;border-bottom:0}
  </style><div class="g"></div><div class="l"><div class="row a">
  <button class="k">${ic('first',60)}</button><button class="k">${ic('revp',46)}</button><button class="k on">${ic('stop',46)}</button><button class="k">${ic('play',46)}</button><button class="k">${ic('last',60)}</button>
  <input class="f" type="text" value="6" aria-label="6"><button class="k h">${ic('stepb',24)}</button><button class="k h">${ic('stepf',24)}</button>
  <svg class="time" height="96"><path d="M0 58H1586" stroke="#b0b0b0" stroke-width="2"/>${ticks}<path d="M765 10H821V43H805L793 54 781 43H765Z" fill="#050505" stroke="#aaa" stroke-width="2"/><text x="786" y="36" font-size="26" fill="#eee">6</text></svg></div>
  <div class="row b">${['winarrow','speaker','loop','clock','ticks','keys'].map(n=>`<button class="k ${n==='clock'?'on':''}">${ic(n,48)}</button>`).join('')}<button class="k d p">${ic('kprev',48)}</button><button class="k d q">${ic('knext',48)}</button>
  <input class="r dim" type="text" value="1" aria-label="1"><input class="r" type="text" value="1" aria-label="1"><div class="rng"></div><input class="r" type="text" value="10" aria-label="10"><input class="r dim" type="text" value="10" aria-label="10"></div></div>
  <div class="key"><button class="c">${ic('key',54)}</button><button class="dd"></button></div>
  <div class="e"><button>${ic('refresh',50,'right')}</button><button class="t">0 keys, 0/0 channels</button><button>${ic('wave',46)}</button><div class="sel"><select aria-label="Key All Channels"><option>Key All Channels</option></select><i></i></div></div>`;
 }
}
customElements.define('hx-playbar',HxPlaybar);

class HxApp extends HTMLElement{
 connectedCallback(){
  this.attachShadow({mode:'open'}).innerHTML=`<style>
  :host{display:flex;flex-direction:column;height:100vh;background:#2e2e2e;overflow:hidden}
  .sh{display:grid;grid-template-columns:minmax(0,1394fr) 27px minmax(0,1337fr);flex:none}
  .sp{background:linear-gradient(#555,#3c3c3c);border-left:2px solid #000;border-right:2px solid #000;border-bottom:2px solid #000;display:flex;align-items:center;justify-content:center}
  .sp::after{content:"";width:5px;height:15px;background:repeating-linear-gradient(#111 0 2px,transparent 2px 4px)}
  .m{flex:1;min-height:0;display:grid;grid-template-columns:11px minmax(0,1458fr) 16px minmax(0,1273fr)}
  .gut{background:#4c4c4c;border-right:1px solid #222;display:flex;flex-direction:column;align-items:center;justify-content:center;gap:48px}
  .gut::before{content:"";border:6px solid transparent;border-right:8px solid #999;border-left:0}
  .gut::after{content:"";border:6px solid transparent;border-left:8px solid #999;border-right:0}
  </style><div class="sh"><hx-shelf set="create"></hx-shelf><div class="sp"></div><hx-shelf set="light"></hx-shelf></div>
  <div class="m"><div class="gut"></div><hx-scene></hx-scene><div class="gut"></div><hx-right></hx-right></div><hx-playbar></hx-playbar>`;
 }
}
customElements.define('hx-app',HxApp);
</script>
</body>
</html>
